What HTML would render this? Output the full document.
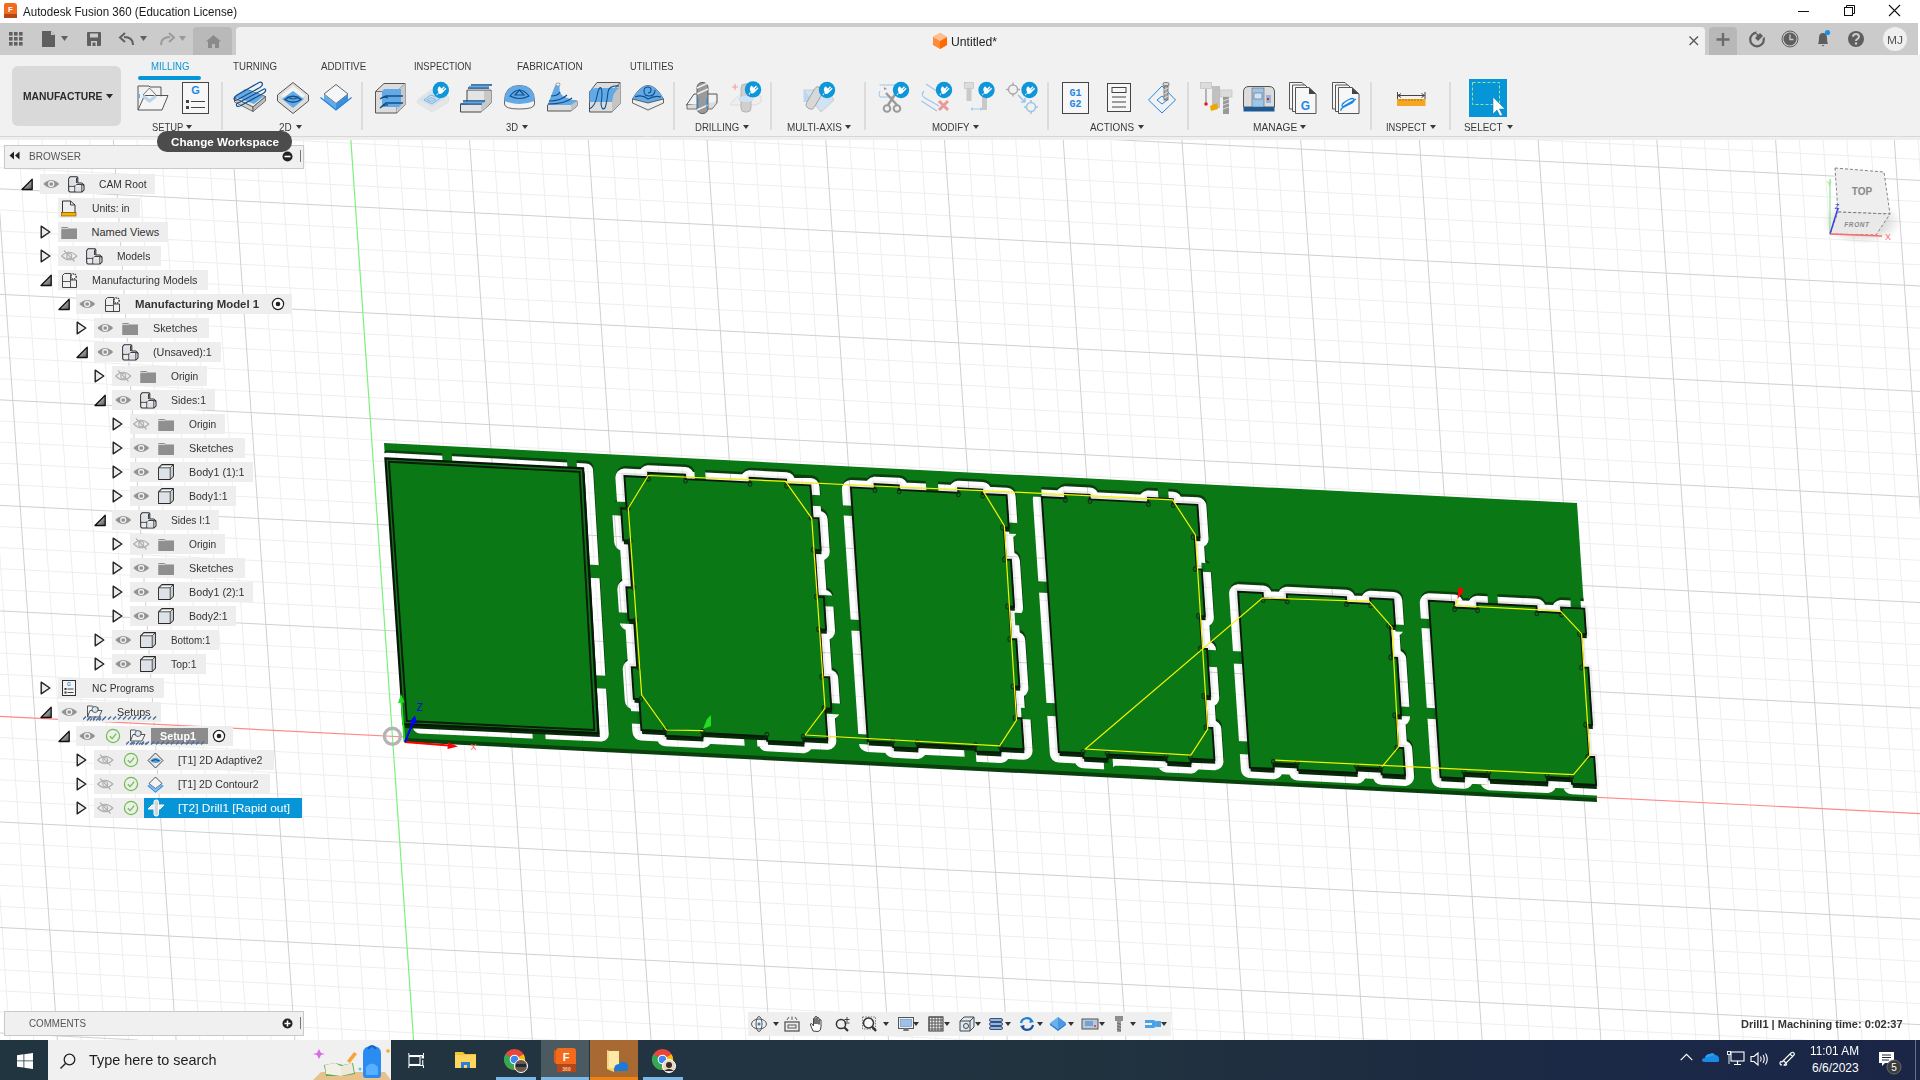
<!DOCTYPE html>
<html><head><meta charset="utf-8"><title>Fusion 360</title>
<style>
html,body{margin:0;padding:0;width:1920px;height:1080px;overflow:hidden;background:#fff;font-family:"Liberation Sans", sans-serif}
.t{position:absolute;white-space:pre;transform-origin:0 0}
svg{display:block}
</style></head><body>
<div style="position:absolute;left:0px;top:0px;width:1920px;height:23px;background:#ffffff"></div>
<svg style="position:absolute;left:3px;top:3px;overflow:visible;" width="16" height="16" viewBox="0 0 16 16"><path d="M1 2 Q1 0 3 0 L11 0 Q14 0 14 3 L14 14 L3 15 Q1 15 1 13Z" fill="#f26b1d"/><rect x="1" y="11" width="13" height="4" fill="#b4461a"/><text x="7.5" y="9" font-size="8" font-weight="700" fill="#fff" text-anchor="middle" font-family="Liberation Sans">F</text></svg>
<svg style="position:absolute;left:1797px;top:5px;overflow:visible;" width="14" height="14" viewBox="0 0 14 14"><line x1="1" y1="6.5" x2="12" y2="6.5" stroke="#111" stroke-width="1"/></svg>
<svg style="position:absolute;left:1843px;top:4px;overflow:visible;" width="14" height="14" viewBox="0 0 14 14"><rect x="1.5" y="3.5" width="8" height="8" fill="none" stroke="#111"/><path d="M3.5 3.5V1.5H11.5V9.5H9.5" fill="none" stroke="#111"/></svg>
<svg style="position:absolute;left:1888px;top:4px;overflow:visible;" width="14" height="14" viewBox="0 0 14 14"><path d="M1 1L12 12M12 1L1 12" stroke="#111" stroke-width="1.1"/></svg>
<div style="position:absolute;left:0px;top:23px;width:1918px;height:32px;background:#cbcbcb"></div>
<div style="position:absolute;left:1918px;top:23px;width:2px;height:32px;background:#ffffff"></div>
<div style="position:absolute;left:193px;top:27px;width:39px;height:28px;background:#b9b9b9;border-radius:4px 4px 0 0"></div>
<div style="position:absolute;left:236px;top:27px;width:1469px;height:28px;background:#f1f1f1;border-radius:4px 4px 0 0"></div>
<div style="position:absolute;left:1709px;top:27px;width:28px;height:28px;background:#b8b8b8;border-radius:4px 4px 0 0"></div>
<div style="position:absolute;left:0px;top:55px;width:1920px;height:82px;background:#f1f1f1"></div>
<div style="position:absolute;left:0px;top:136px;width:1920px;height:1px;background:#d6d6d6"></div>
<svg style="position:absolute;left:0px;top:0px;overflow:visible;" width="30" height="50" viewBox="0 0 30 50"><rect x="9" y="32" width="3.6" height="3.6" fill="#616161"/><rect x="9" y="37" width="3.6" height="3.6" fill="#616161"/><rect x="9" y="42" width="3.6" height="3.6" fill="#616161"/><rect x="14" y="32" width="3.6" height="3.6" fill="#616161"/><rect x="14" y="37" width="3.6" height="3.6" fill="#616161"/><rect x="14" y="42" width="3.6" height="3.6" fill="#616161"/><rect x="19" y="32" width="3.6" height="3.6" fill="#616161"/><rect x="19" y="37" width="3.6" height="3.6" fill="#616161"/><rect x="19" y="42" width="3.6" height="3.6" fill="#616161"/></svg>
<svg style="position:absolute;left:42px;top:31px;overflow:visible;" width="14" height="17" viewBox="0 0 14 17"><path d="M0 0H9L13 4V16H0Z" fill="#5f5f5f"/><path d="M9 0V4H13" fill="#cbcbcb"/></svg>
<svg style="position:absolute;left:61px;top:36px;overflow:visible;" width="8" height="6" viewBox="0 0 8 6"><path d="M0 0H7L3.5 5Z" fill="#5f5f5f"/></svg>
<svg style="position:absolute;left:87px;top:32px;overflow:visible;" width="14" height="14" viewBox="0 0 14 14"><path d="M0 1Q0 0 1 0H13Q14 0 14 1V13Q14 14 13 14H1Q0 14 0 13Z" fill="#5f5f5f"/><rect x="3" y="1.5" width="8" height="4" fill="#cbcbcb"/><rect x="4" y="9" width="6" height="5" fill="#cbcbcb"/><rect x="5.5" y="10.5" width="3" height="3.5" fill="#5f5f5f"/></svg>
<svg style="position:absolute;left:120px;top:33px;overflow:visible;" width="14" height="13" viewBox="0 0 14 13"><path d="M13 12 Q13 4 4 4" fill="none" stroke="#5f5f5f" stroke-width="2"/><path d="M5 0L0 4.5L5 9" fill="none" stroke="#5f5f5f" stroke-width="2"/></svg>
<svg style="position:absolute;left:140px;top:36px;overflow:visible;" width="8" height="6" viewBox="0 0 8 6"><path d="M0 0H7L3.5 5Z" fill="#5f5f5f"/></svg>
<svg style="position:absolute;left:160px;top:33px;overflow:visible;" width="14" height="13" viewBox="0 0 14 13"><path d="M1 12 Q1 4 10 4" fill="none" stroke="#9a9a9a" stroke-width="2"/><path d="M9 0L14 4.5L9 9" fill="none" stroke="#9a9a9a" stroke-width="2"/></svg>
<svg style="position:absolute;left:179px;top:36px;overflow:visible;" width="8" height="6" viewBox="0 0 8 6"><path d="M0 0H7L3.5 5Z" fill="#9a9a9a"/></svg>
<svg style="position:absolute;left:206px;top:35px;overflow:visible;" width="15" height="13" viewBox="0 0 15 13"><path d="M7.5 0L15 6.5H13V13H9V9H6V13H2V6.5H0Z" fill="#8a8a8a"/></svg>
<svg style="position:absolute;left:932px;top:33px;overflow:visible;" width="16" height="17" viewBox="0 0 16 17"><path d="M8 0L15 4V12L8 16L1 12V4Z" fill="#ff8c3a"/><path d="M8 8L15 4V12L8 16Z" fill="#ff6a00"/><path d="M1 4L8 0L15 4L8 8Z" fill="#ffc08f"/></svg>
<svg style="position:absolute;left:1689px;top:36px;overflow:visible;" width="10" height="10" viewBox="0 0 10 10"><path d="M0.5 0.5L9 9M9 0.5L0.5 9" stroke="#555" stroke-width="1.3"/></svg>
<svg style="position:absolute;left:1716px;top:33px;overflow:visible;" width="14" height="14" viewBox="0 0 14 14"><path d="M7 0V13M0.5 6.5H13.5" stroke="#6c6c6c" stroke-width="2.4"/></svg>
<svg style="position:absolute;left:1748px;top:30px;overflow:visible;" width="18" height="18" viewBox="0 0 18 18"><circle cx="9" cy="9.5" r="6.8" fill="none" stroke="#5e5e5e" stroke-width="2.2"/><path d="M8 5L12 1.5L15 4.5L11.5 8.5Z" fill="#5e5e5e"/><rect x="9" y="0" width="9" height="6" fill="#cbcbcb" transform="rotate(45 13 3)"/><path d="M7 8L12 3L15 6L10 11Z" fill="#5e5e5e"/></svg>
<svg style="position:absolute;left:1781px;top:30px;overflow:visible;" width="18" height="18" viewBox="0 0 18 18"><circle cx="9" cy="9" r="8" fill="none" stroke="#5e5e5e" stroke-width="1"/><circle cx="9" cy="9" r="6.5" fill="#5e5e5e"/><path d="M9 4.5V9.5H12.5" fill="none" stroke="#cbcbcb" stroke-width="1.3"/></svg>
<svg style="position:absolute;left:1815px;top:30px;overflow:visible;" width="18" height="18" viewBox="0 0 18 18"><path d="M3 14Q4 12 4 8Q4 3 8 3Q12 3 12 8Q12 12 13 14Z" fill="#5e5e5e"/><path d="M6.5 15H9.5L8 16.5Z" fill="#5e5e5e"/><circle cx="12.5" cy="2.5" r="2.6" fill="#1592e6"/></svg>
<svg style="position:absolute;left:1847px;top:30px;overflow:visible;" width="18" height="18" viewBox="0 0 18 18"><circle cx="9" cy="9" r="8" fill="#5e5e5e"/><path d="M6 6.8Q6 4 9 4Q12 4 12 6.6Q12 8.2 10 9.3Q9 9.9 9 11" fill="none" stroke="#cbcbcb" stroke-width="2"/><circle cx="9" cy="13.5" r="1.2" fill="#cbcbcb"/></svg>
<div style="position:absolute;left:1883px;top:27px;width:24px;height:24px;background:#efefef;border-radius:50%"></div>
<div style="position:absolute;left:12px;top:66px;width:109px;height:60px;background:#d9d9d9;border-radius:6px"></div>
<svg style="position:absolute;left:106px;top:94px;overflow:visible;" width="8" height="6" viewBox="0 0 8 6"><path d="M0 0H7L3.5 4.5Z" fill="#2b2b2b"/></svg>
<div style="position:absolute;left:138px;top:76px;width:63px;height:3.5px;background:#0696d7;border-radius:2px"></div>
<div style="position:absolute;left:221px;top:82px;width:2px;height:48px;background:#dcdcdc"></div>
<div style="position:absolute;left:361px;top:82px;width:2px;height:48px;background:#dcdcdc"></div>
<div style="position:absolute;left:673px;top:82px;width:2px;height:48px;background:#dcdcdc"></div>
<div style="position:absolute;left:770px;top:82px;width:2px;height:48px;background:#dcdcdc"></div>
<div style="position:absolute;left:864px;top:82px;width:2px;height:48px;background:#dcdcdc"></div>
<div style="position:absolute;left:1047px;top:82px;width:2px;height:48px;background:#dcdcdc"></div>
<div style="position:absolute;left:1187px;top:82px;width:2px;height:48px;background:#dcdcdc"></div>
<div style="position:absolute;left:1370px;top:82px;width:2px;height:48px;background:#dcdcdc"></div>
<div style="position:absolute;left:1449px;top:82px;width:2px;height:48px;background:#dcdcdc"></div>
<svg style="position:absolute;left:186px;top:124.5px;overflow:visible;" width="7" height="5" viewBox="0 0 7 5"><path d="M0 0H6L3 4Z" fill="#3a3a3a"/></svg>
<svg style="position:absolute;left:296px;top:124.5px;overflow:visible;" width="7" height="5" viewBox="0 0 7 5"><path d="M0 0H6L3 4Z" fill="#3a3a3a"/></svg>
<svg style="position:absolute;left:522px;top:124.5px;overflow:visible;" width="7" height="5" viewBox="0 0 7 5"><path d="M0 0H6L3 4Z" fill="#3a3a3a"/></svg>
<svg style="position:absolute;left:743px;top:124.5px;overflow:visible;" width="7" height="5" viewBox="0 0 7 5"><path d="M0 0H6L3 4Z" fill="#3a3a3a"/></svg>
<svg style="position:absolute;left:845px;top:124.5px;overflow:visible;" width="7" height="5" viewBox="0 0 7 5"><path d="M0 0H6L3 4Z" fill="#3a3a3a"/></svg>
<svg style="position:absolute;left:973px;top:124.5px;overflow:visible;" width="7" height="5" viewBox="0 0 7 5"><path d="M0 0H6L3 4Z" fill="#3a3a3a"/></svg>
<svg style="position:absolute;left:1138px;top:124.5px;overflow:visible;" width="7" height="5" viewBox="0 0 7 5"><path d="M0 0H6L3 4Z" fill="#3a3a3a"/></svg>
<svg style="position:absolute;left:1300px;top:124.5px;overflow:visible;" width="7" height="5" viewBox="0 0 7 5"><path d="M0 0H6L3 4Z" fill="#3a3a3a"/></svg>
<svg style="position:absolute;left:1430px;top:124.5px;overflow:visible;" width="7" height="5" viewBox="0 0 7 5"><path d="M0 0H6L3 4Z" fill="#3a3a3a"/></svg>
<svg style="position:absolute;left:1507px;top:124.5px;overflow:visible;" width="7" height="5" viewBox="0 0 7 5"><path d="M0 0H6L3 4Z" fill="#3a3a3a"/></svg>
<svg style="position:absolute;left:0;top:0" width="1920" height="140"><g transform="translate(137,85)"><path d="M1 25V1H12L13 2H24V12" fill="none" stroke="#555" stroke-width="1"/><path d="M6 10L12.5 3L19 10L12.5 15Z" fill="#f4f4f4" stroke="#666" stroke-width="0.9"/><path d="M1 25L7.5 10.5H31L25 25Z" fill="#f6f6f6" fill-opacity="0.7" stroke="#555" stroke-width="1"/><path d="M6 11L12.5 16L19 11" fill="none" stroke="#b8d4ec" stroke-width="3"/><rect x="1" y="9" width="2" height="4" fill="#6aaee8"/></g><g transform="translate(182,82)"><rect x="0.5" y="0.5" width="26" height="31" fill="#f7f7f7" stroke="#444" stroke-width="1"/><text x="13.5" y="12" font-size="11" font-weight="700" fill="#1e88e5" text-anchor="middle" font-family="Liberation Sans">G</text><rect x="4" y="18" width="3" height="3" fill="#444"/><rect x="4" y="24" width="3" height="3" fill="#444"/><path d="M9 19.5H23M9 25.5H23" stroke="#444" stroke-width="1"/></g><g transform="translate(234,82)"><path d="M0.5 16L13 7.5L31.5 14.5L19 25Z" fill="#e8e8e8" stroke="#555" stroke-width="1"/><path d="M0.5 16V20L19 29.5V25Z" fill="#d2d2d2" stroke="#555" stroke-width="0.8"/><path d="M19 25V29.5L31.5 19V14.5Z" fill="#bcbcbc" stroke="#555" stroke-width="0.8"/><path d="M1 15L11 7L30 14L20 22Z" fill="#63a9e6"/><path d="M3 13L25 0.5Q28 -0.5 28.5 2Q28.5 4 26 5.5L3 18Q0 19 0 16.5Q0.5 14.5 3 13ZM6 20L30 7Q32 6.5 31.5 9Q31 10.5 29 11.5L6 24Q2 25.5 2.5 22Q3 21 6 20Z" fill="none" stroke="#0f4f8a" stroke-width="1.2"/></g><g transform="translate(277,82)"><path d="M16 0.5L31.5 13V19L16 31.5L0.5 19V13Z" fill="#dedede" stroke="#555" stroke-width="1"/><path d="M16 4L28 13.5L16 23L4 13.5Z" fill="#f4f4f4"/><path d="M16 9L27 17L16 26L5 17Z" fill="#63a9e6"/><path d="M8 17.5Q16 11 24 17.5Q16 23 8 17.5Z" fill="none" stroke="#0f4f8a" stroke-width="1.3"/><path d="M10 15Q16 19 22 15" fill="none" stroke="#0f4f8a" stroke-width="1"/></g><g transform="translate(320,84)"><path d="M16 0.5L28 10L16 19.5L4 10Z" fill="#f6f6f6" stroke="#555" stroke-width="0.9"/><path d="M4 10L16 19.5V26L4 16.5Z" fill="#63a9e6"/><path d="M16 19.5L28 10V16.5L16 26Z" fill="#3d8fd8"/><path d="M0.5 13.5L16 26L31.5 13.5" fill="none" stroke="#1e88e5" stroke-width="1.3"/></g><g transform="translate(375,83)"><path d="M0.5 8.5L9 0.5H30V22L22 30H0.5Z" fill="#dcdcdc" stroke="#555" stroke-width="1"/><path d="M22 8.5V30M0.5 8.5H22L30 0.5" fill="none" stroke="#555" stroke-width="0.8"/><path d="M22 8.5L30 0.5V22L22 30Z" fill="#c8c8c8"/><path d="M7 8.5L9 6H26V22L24 24H7Z" fill="#63a9e6"/><path d="M6 15L11 13H28M6 24L11 20H28M5 16Q9 13 13 15M5 25Q9 21 13 22" fill="none" stroke="#0f4f8a" stroke-width="1.3"/></g><g transform="translate(417,82)"><path d="M0.5 18L14 8L31.5 15V20L15 30L0.5 21Z" fill="#e6e6e6" stroke="#ddd" stroke-width="0.8"/><path d="M2 18L14 9.5L29 15.5L15 25Z" fill="#cfe3f5"/><path d="M7 18L14 13L23 16.5L15 22Z" fill="none" stroke="#7faad0" stroke-width="0.9"/><path d="M10 18L14 15.5L19 17.5L15 20Z" fill="#b8d6f0" stroke="#7faad0" stroke-width="0.7"/><g transform="translate(23.8,8)"><circle r="8.2" fill="#0d96d8"/><circle r="6.6" fill="none" stroke="#fff" stroke-width="0.8" opacity="0"/><path d="M-4.5 4.5L-2.2 2.2Q-4.5 -1 -1.5 -3.8L0.8 -1.6L3 -3.8L4 -2.8L1.8 -0.6L2.4 0L4.6 -2.2L5.6 -1.2L3.4 1L1.2 3.3Q-1.2 5 -2.9 3L-3.5 5.5Z" fill="#fff"/></g></g><g transform="translate(460,84)"><path d="M7 6H31V19L21 28H0.5V20H7Z" fill="#e4e4e4" stroke="#444" stroke-width="1"/><path d="M24 7H31V19L21 28V21L24 18Z" fill="#c8c8c8"/><path d="M7 5H31M0.5 20H24" stroke="#d8d8d8" stroke-width="1"/><path d="M11 1H32M8 4H29M3 17H25M0.5 20H22" stroke="#0f4f8a" stroke-width="1.6"/><path d="M9 2.5H29M3 18.5H24" stroke="#63a9e6" stroke-width="1.6"/></g><g transform="translate(504,85)"><path d="M0.5 16Q0.5 0.5 15.5 0.5Q30.5 0.5 30.5 16V19Q30.5 24 15.5 24Q0.5 24 0.5 19Z" fill="#f4f4f4" stroke="#555" stroke-width="0.9"/><path d="M0.5 16Q0.5 0.5 15.5 0.5Q30.5 0.5 30.5 16Q15.5 22 0.5 16Z" fill="#63a9e6"/><path d="M6 11Q15.5 -1 25 11Q15.5 16 6 11Z" fill="none" stroke="#0f4f8a" stroke-width="1.2"/><path d="M11 10L15.5 5L20 10Z" fill="none" stroke="#0f4f8a" stroke-width="1.2"/></g><g transform="translate(547,82)"><path d="M0.5 23L6 19H30V24L24 29H0.5Z" fill="#dedede" stroke="#555" stroke-width="1"/><path d="M24 23V29L30 24V19Z" fill="#c4c4c4"/><path d="M0.5 23L6 9Q8 3 10 1H13Q11 10 16 14Q24 18 30 19L24 23Z" fill="#63a9e6"/><rect x="9" y="1" width="4" height="3" rx="1.5" fill="#f4f4f4" stroke="#777" stroke-width="0.6"/><path d="M4 14Q11 14 13 10M2 19Q14 19 20 13M1 22Q18 22 25 16" fill="none" stroke="#0f4f8a" stroke-width="1.1"/></g><g transform="translate(589,82)"><path d="M0.5 30V10L8 0.5H31V22L23 30Z" fill="#dcdcdc" stroke="#555" stroke-width="1"/><path d="M23 10V30L31 22V0.5Z" fill="#c4c4c4"/><path d="M0.5 10H23L31 0.5" fill="none" stroke="#555" stroke-width="0.8"/><path d="M0.5 18V10Q2 6 8 6H30Q24 10 23 20H0.5Z" fill="#63a9e6"/><path d="M0 27Q6 25 8 14Q10 4 12 6Q14 10 12 22Q13 29 16 26Q18 20 19 10Q20 3 30 4" fill="none" stroke="#0f4f8a" stroke-width="1.1"/></g><g transform="translate(632,85)"><path d="M0.5 14Q8 0.5 16 0.5Q24 0.5 31.5 14V18L16 25L0.5 18Z" fill="#eeeeee" stroke="#555" stroke-width="0.9"/><path d="M0.5 14Q8 0.5 16 0.5Q24 0.5 31.5 14L16 18Z" fill="#63a9e6"/><path d="M0.5 14L16 18L31.5 14" fill="none" stroke="#444" stroke-width="0.8"/><path d="M16 8Q19 8 19 5Q19 2 16 2Q12 2 12 6Q12 11 17 11Q23 11 23 5M3 12Q10 9 16 14Q23 10 29 12" fill="none" stroke="#0f4f8a" stroke-width="1.1"/></g><g transform="translate(686,82)"><path d="M0.5 23L8 12H31V20L26 23Z" fill="#f2f2f2" stroke="#555" stroke-width="1"/><path d="M0.5 23H26L31 20" fill="none" stroke="#555"/><path d="M1 23V27H26L31 21V20" fill="#dcdcdc" stroke="#555" stroke-width="0.8"/><rect x="11" y="0.5" width="11" height="31" rx="5" fill="#9a9a9a" stroke="#555" stroke-width="0.9"/><path d="M11 6L22 1M11 12L22 7M11 28L22 23" stroke="#eee" stroke-width="1.4"/><path d="M12 16V26M21 16V26" stroke="#1e88e5" stroke-width="1"/></g><g transform="translate(730,82)"><path d="M0.5 22L8 14H31V20L26 23H0.5Z" fill="#eeeeee" stroke="#ddd"/><rect x="11" y="2" width="10" height="28" rx="4" fill="#cfcfcf" stroke="#aaa" stroke-width="0.8"/><ellipse cx="16" cy="17" rx="8" ry="3" fill="#cfe3f5"/><path d="M2 5H8M5 2V8" stroke="#f0a0a0" stroke-width="1.2"/><g transform="translate(23,7.4)"><circle r="8.2" fill="#0d96d8"/><circle r="6.6" fill="none" stroke="#fff" stroke-width="0.8" opacity="0"/><path d="M-4.5 4.5L-2.2 2.2Q-4.5 -1 -1.5 -3.8L0.8 -1.6L3 -3.8L4 -2.8L1.8 -0.6L2.4 0L4.6 -2.2L5.6 -1.2L3.4 1L1.2 3.3Q-1.2 5 -2.9 3L-3.5 5.5Z" fill="#fff"/></g></g><g transform="translate(803,82)"><path d="M0.5 8H25L31 18L18 30Z" fill="#cfe3f5" stroke="#ccc"/><path d="M0.5 8V20H10Z" fill="#b9d8f2"/><rect x="7" y="4" width="9" height="24" rx="4" fill="#d8d8d8" stroke="#9a9a9a" stroke-width="0.8" transform="rotate(30 11.5 16)"/><g transform="translate(24,8)"><circle r="8.2" fill="#0d96d8"/><circle r="6.6" fill="none" stroke="#fff" stroke-width="0.8" opacity="0"/><path d="M-4.5 4.5L-2.2 2.2Q-4.5 -1 -1.5 -3.8L0.8 -1.6L3 -3.8L4 -2.8L1.8 -0.6L2.4 0L4.6 -2.2L5.6 -1.2L3.4 1L1.2 3.3Q-1.2 5 -2.9 3L-3.5 5.5Z" fill="#fff"/></g></g><g transform="translate(879,82)"><path d="M0.5 3H17M1 9Q-1 13 1 15H15" fill="none" stroke="#9cc5ea" stroke-width="1"/><path d="M5 5L8 7L5 8Z" fill="#999"/><path d="M7 11L18 23M17 11L9 23" stroke="#9a9a9a" stroke-width="2.4"/><circle cx="8" cy="26.5" r="3.3" fill="none" stroke="#9a9a9a" stroke-width="2"/><circle cx="18" cy="26.5" r="3.3" fill="none" stroke="#9a9a9a" stroke-width="2"/><g transform="translate(22,8)"><circle r="8.2" fill="#0d96d8"/><circle r="6.6" fill="none" stroke="#fff" stroke-width="0.8" opacity="0"/><path d="M-4.5 4.5L-2.2 2.2Q-4.5 -1 -1.5 -3.8L0.8 -1.6L3 -3.8L4 -2.8L1.8 -0.6L2.4 0L4.6 -2.2L5.6 -1.2L3.4 1L1.2 3.3Q-1.2 5 -2.9 3L-3.5 5.5Z" fill="#fff"/></g></g><g transform="translate(921,82)"><path d="M5 2L20 12M0.5 19L16 29M3 9Q-1 13 4 16L18 24" fill="none" stroke="#9cc5ea" stroke-width="1.1"/><path d="M18 19L27 28M27 19L18 28" stroke="#e89a9a" stroke-width="3"/><g transform="translate(23,8)"><circle r="8.2" fill="#0d96d8"/><circle r="6.6" fill="none" stroke="#fff" stroke-width="0.8" opacity="0"/><path d="M-4.5 4.5L-2.2 2.2Q-4.5 -1 -1.5 -3.8L0.8 -1.6L3 -3.8L4 -2.8L1.8 -0.6L2.4 0L4.6 -2.2L5.6 -1.2L3.4 1L1.2 3.3Q-1.2 5 -2.9 3L-3.5 5.5Z" fill="#fff"/></g></g><g transform="translate(964,82)"><rect x="0.5" y="0.5" width="9" height="6" fill="#dcdcdc" stroke="#bbb" stroke-width="0.6"/><rect x="2.5" y="6" width="5" height="13" fill="#c9c9c9"/><rect x="18" y="13" width="5" height="15" fill="#c9c9c9"/><path d="M7 27H18M7 27L9 25.5M7 27L9 28.5M18 27L16 25.5M18 27L16 28.5" stroke="#9cc5ea" stroke-width="0.9"/><g transform="translate(22.5,8)"><circle r="8.2" fill="#0d96d8"/><circle r="6.6" fill="none" stroke="#fff" stroke-width="0.8" opacity="0"/><path d="M-4.5 4.5L-2.2 2.2Q-4.5 -1 -1.5 -3.8L0.8 -1.6L3 -3.8L4 -2.8L1.8 -0.6L2.4 0L4.6 -2.2L5.6 -1.2L3.4 1L1.2 3.3Q-1.2 5 -2.9 3L-3.5 5.5Z" fill="#fff"/></g></g><g transform="translate(1006,82)"><circle cx="7" cy="7.5" r="4.5" fill="none" stroke="#aaa" stroke-width="1.4"/><path d="M7 0.5V3M7 12V14.5M0 7.5H2.5M11.5 7.5H14" stroke="#aaa" stroke-width="1.4"/><circle cx="25" cy="25" r="4.5" fill="none" stroke="#9cc5ea" stroke-width="1.6"/><path d="M25 18V20.5M25 29.5V32M18 25H20.5M29.5 25H32" stroke="#9cc5ea" stroke-width="1.6"/><path d="M12 13L19 20M19 20L19 16M19 20L15 20" stroke="#9cc5ea" stroke-width="1.6"/><g transform="translate(23.5,8)"><circle r="8.2" fill="#0d96d8"/><circle r="6.6" fill="none" stroke="#fff" stroke-width="0.8" opacity="0"/><path d="M-4.5 4.5L-2.2 2.2Q-4.5 -1 -1.5 -3.8L0.8 -1.6L3 -3.8L4 -2.8L1.8 -0.6L2.4 0L4.6 -2.2L5.6 -1.2L3.4 1L1.2 3.3Q-1.2 5 -2.9 3L-3.5 5.5Z" fill="#fff"/></g></g><g transform="translate(1062,82)"><rect x="0.5" y="0.5" width="26" height="31" fill="#f7f7f7" stroke="#444" stroke-width="1"/><text x="13.5" y="14" font-size="10" font-weight="700" fill="#1e88e5" text-anchor="middle" font-family="Liberation Mono">G1</text><text x="13.5" y="25" font-size="10" font-weight="700" fill="#1e88e5" text-anchor="middle" font-family="Liberation Mono">G2</text></g><g transform="translate(1107,83)"><rect x="0.5" y="0.5" width="23" height="28" fill="#f7f7f7" stroke="#444" stroke-width="1"/><rect x="5" y="4.5" width="14" height="5" fill="none" stroke="#444" stroke-width="1"/><path d="M5 14H19M5 19H19M5 24H19" stroke="#444" stroke-width="1"/></g><g transform="translate(1148,82)"><path d="M14 4L27.5 18L14 31L0.5 18Z" fill="none" stroke="#1e88e5" stroke-width="1"/><path d="M14 14L19 18L14 22L9 18Z" fill="none" stroke="#1e88e5" stroke-width="1"/><rect x="15" y="0.5" width="6" height="3.5" rx="1.5" fill="#d8d8d8" stroke="#555" stroke-width="0.7"/><rect x="16" y="4" width="4" height="14" fill="#a8a8a8" stroke="#555" stroke-width="0.7"/><path d="M16 8L20 6M16 12L20 10M16 16L20 14" stroke="#eee" stroke-width="0.8"/></g><g transform="translate(1200,82)"><rect x="0.5" y="0.5" width="11" height="6" fill="#dcdcdc" stroke="#bbb" stroke-width="0.6"/><path d="M6 7V21" stroke="#777" stroke-width="1"/><circle cx="6" cy="22" r="1.8" fill="#e02020"/><rect x="12" y="4" width="8" height="22" fill="#c0c0c0"/><path d="M10 24L17 21L18 27L11 29Z" fill="#f0a500"/><rect x="20" y="8" width="12" height="7" fill="#dcdcdc" stroke="#bbb" stroke-width="0.6"/><rect x="23" y="15" width="6" height="17" fill="#9a9a9a"/><path d="M23 19L29 17M23 23L29 21M23 27L29 25" stroke="#ddd" stroke-width="0.9"/></g><g transform="translate(1243,86)"><path d="M0.5 21V6Q0.5 0.5 6 0.5H26Q31.5 0.5 31.5 6V21Z" fill="#dcdcdc" stroke="#444" stroke-width="0.9"/><rect x="9" y="2" width="12" height="19" fill="#9cc5ea" stroke="#666" stroke-width="0.6"/><rect x="11" y="7" width="8" height="6" fill="#cfe3f5" stroke="#666" stroke-width="0.6"/><rect x="23" y="9" width="5" height="8" fill="#8fb7e0"/><rect x="24" y="12" width="2" height="2" fill="#e02020"/><rect x="0.5" y="21" width="31" height="4.5" fill="#1d5a94"/></g><g transform="translate(1289,82)"><path d="M0.5 0.5H13L17 4.5V27H0.5Z" fill="#f7f7f7" stroke="#444" stroke-width="0.9"/><path d="M3.5 3H16L20 7V29.5H3.5Z" fill="#f7f7f7" stroke="#444" stroke-width="0.9"/><path d="M6.5 5.5H20L27 12V31.5H6.5Z" fill="#f7f7f7" stroke="#444" stroke-width="0.9"/><path d="M20 5.5L27 12H20Z" fill="#444"/><text x="16.5" y="28" font-size="12" font-weight="700" fill="#1e88e5" text-anchor="middle" font-family="Liberation Sans">G</text></g><g transform="translate(1332,82)"><path d="M0.5 0.5H13L17 4.5V27H0.5Z" fill="#f7f7f7" stroke="#444" stroke-width="0.9"/><path d="M3.5 3H16L20 7V29.5H3.5Z" fill="#f7f7f7" stroke="#444" stroke-width="0.9"/><path d="M6.5 5.5H20L27 12V31.5H6.5Z" fill="#f7f7f7" stroke="#444" stroke-width="0.9"/><path d="M20 5.5L27 12H20Z" fill="#444"/><path d="M24 17L12 24Q9 25.5 10.5 22Q12 20 17 17.5Q21 15.5 22 17.5Q23 19.5 17 22.5L12 25Q8 27 9 29" fill="none" stroke="#1e88e5" stroke-width="1.3"/></g><g transform="translate(1397,90)"><path d="M0.5 2V9M28 2V9M1 5.5H27.5" stroke="#444" stroke-width="1"/><path d="M1 5.5L4 3.5M1 5.5L4 7.5M27.5 5.5L24.5 3.5M27.5 5.5L24.5 7.5" stroke="#444" stroke-width="1"/><rect x="0" y="9" width="28.5" height="7" fill="#f5a623"/><path d="M3 9V11M6 9V11M9 9V11M12 9V11M15 9V11M18 9V11M21 9V11M24 9V11" stroke="#8a5a00" stroke-width="0.7"/></g><g transform="translate(1469,79)"><rect x="0" y="0" width="38" height="38" fill="#0696d7"/><rect x="3.5" y="3.5" width="27" height="22" fill="none" stroke="#9fe0a0" stroke-width="1" stroke-dasharray="3 2"/><path d="M24 18V35L28 31L31 37L33.5 36L30.5 30H36Z" fill="#fff" stroke="#0d6fa8" stroke-width="0.5"/></g></svg>
<div style="position:absolute;left:0px;top:137px;width:1920px;height:903px;background:#ffffff"></div>
<svg style="position:absolute;left:0;top:0" width="1920" height="1080"><line x1="9.88" y1="1040.00" x2="-5.00" y2="826.43" stroke="#eeeeee"/><line x1="33.63" y1="1040.00" x2="-5.00" y2="485.69" stroke="#eeeeee"/><line x1="81.12" y1="1040.00" x2="18.19" y2="137.00" stroke="#eeeeee"/><line x1="104.87" y1="1040.00" x2="41.94" y2="137.00" stroke="#eeeeee"/><line x1="128.61" y1="1040.00" x2="65.68" y2="137.00" stroke="#eeeeee"/><line x1="152.36" y1="1040.00" x2="89.43" y2="137.00" stroke="#eeeeee"/><line x1="199.85" y1="1040.00" x2="136.92" y2="137.00" stroke="#eeeeee"/><line x1="223.60" y1="1040.00" x2="160.67" y2="137.00" stroke="#eeeeee"/><line x1="247.34" y1="1040.00" x2="184.41" y2="137.00" stroke="#eeeeee"/><line x1="271.09" y1="1040.00" x2="208.16" y2="137.00" stroke="#eeeeee"/><line x1="318.58" y1="1040.00" x2="255.65" y2="137.00" stroke="#eeeeee"/><line x1="342.33" y1="1040.00" x2="279.40" y2="137.00" stroke="#eeeeee"/><line x1="366.07" y1="1040.00" x2="303.14" y2="137.00" stroke="#eeeeee"/><line x1="389.82" y1="1040.00" x2="326.89" y2="137.00" stroke="#eeeeee"/><line x1="437.31" y1="1040.00" x2="374.38" y2="137.00" stroke="#eeeeee"/><line x1="461.06" y1="1040.00" x2="398.13" y2="137.00" stroke="#eeeeee"/><line x1="484.80" y1="1040.00" x2="421.87" y2="137.00" stroke="#eeeeee"/><line x1="508.55" y1="1040.00" x2="445.62" y2="137.00" stroke="#eeeeee"/><line x1="556.04" y1="1040.00" x2="493.11" y2="137.00" stroke="#eeeeee"/><line x1="579.79" y1="1040.00" x2="516.86" y2="137.00" stroke="#eeeeee"/><line x1="603.53" y1="1040.00" x2="540.60" y2="137.00" stroke="#eeeeee"/><line x1="627.28" y1="1040.00" x2="564.35" y2="137.00" stroke="#eeeeee"/><line x1="674.77" y1="1040.00" x2="611.84" y2="137.00" stroke="#eeeeee"/><line x1="698.52" y1="1040.00" x2="635.59" y2="137.00" stroke="#eeeeee"/><line x1="722.26" y1="1040.00" x2="659.33" y2="137.00" stroke="#eeeeee"/><line x1="746.01" y1="1040.00" x2="683.08" y2="137.00" stroke="#eeeeee"/><line x1="793.50" y1="1040.00" x2="730.57" y2="137.00" stroke="#eeeeee"/><line x1="817.25" y1="1040.00" x2="754.32" y2="137.00" stroke="#eeeeee"/><line x1="840.99" y1="1040.00" x2="778.06" y2="137.00" stroke="#eeeeee"/><line x1="864.74" y1="1040.00" x2="801.81" y2="137.00" stroke="#eeeeee"/><line x1="912.23" y1="1040.00" x2="849.30" y2="137.00" stroke="#eeeeee"/><line x1="935.98" y1="1040.00" x2="873.05" y2="137.00" stroke="#eeeeee"/><line x1="959.72" y1="1040.00" x2="896.79" y2="137.00" stroke="#eeeeee"/><line x1="983.47" y1="1040.00" x2="920.54" y2="137.00" stroke="#eeeeee"/><line x1="1030.96" y1="1040.00" x2="968.03" y2="137.00" stroke="#eeeeee"/><line x1="1054.71" y1="1040.00" x2="991.78" y2="137.00" stroke="#eeeeee"/><line x1="1078.45" y1="1040.00" x2="1015.52" y2="137.00" stroke="#eeeeee"/><line x1="1102.20" y1="1040.00" x2="1039.27" y2="137.00" stroke="#eeeeee"/><line x1="1149.69" y1="1040.00" x2="1086.76" y2="137.00" stroke="#eeeeee"/><line x1="1173.43" y1="1040.00" x2="1110.51" y2="137.00" stroke="#eeeeee"/><line x1="1197.18" y1="1040.00" x2="1134.25" y2="137.00" stroke="#eeeeee"/><line x1="1220.93" y1="1040.00" x2="1158.00" y2="137.00" stroke="#eeeeee"/><line x1="1268.42" y1="1040.00" x2="1205.49" y2="137.00" stroke="#eeeeee"/><line x1="1292.16" y1="1040.00" x2="1229.24" y2="137.00" stroke="#eeeeee"/><line x1="1315.91" y1="1040.00" x2="1252.98" y2="137.00" stroke="#eeeeee"/><line x1="1339.66" y1="1040.00" x2="1276.73" y2="137.00" stroke="#eeeeee"/><line x1="1387.15" y1="1040.00" x2="1324.22" y2="137.00" stroke="#eeeeee"/><line x1="1410.89" y1="1040.00" x2="1347.97" y2="137.00" stroke="#eeeeee"/><line x1="1434.64" y1="1040.00" x2="1371.71" y2="137.00" stroke="#eeeeee"/><line x1="1458.39" y1="1040.00" x2="1395.46" y2="137.00" stroke="#eeeeee"/><line x1="1505.88" y1="1040.00" x2="1442.95" y2="137.00" stroke="#eeeeee"/><line x1="1529.62" y1="1040.00" x2="1466.70" y2="137.00" stroke="#eeeeee"/><line x1="1553.37" y1="1040.00" x2="1490.44" y2="137.00" stroke="#eeeeee"/><line x1="1577.12" y1="1040.00" x2="1514.19" y2="137.00" stroke="#eeeeee"/><line x1="1624.61" y1="1040.00" x2="1561.68" y2="137.00" stroke="#eeeeee"/><line x1="1648.35" y1="1040.00" x2="1585.43" y2="137.00" stroke="#eeeeee"/><line x1="1672.10" y1="1040.00" x2="1609.17" y2="137.00" stroke="#eeeeee"/><line x1="1695.85" y1="1040.00" x2="1632.92" y2="137.00" stroke="#eeeeee"/><line x1="1743.34" y1="1040.00" x2="1680.41" y2="137.00" stroke="#eeeeee"/><line x1="1767.08" y1="1040.00" x2="1704.16" y2="137.00" stroke="#eeeeee"/><line x1="1790.83" y1="1040.00" x2="1727.90" y2="137.00" stroke="#eeeeee"/><line x1="1814.58" y1="1040.00" x2="1751.65" y2="137.00" stroke="#eeeeee"/><line x1="1862.07" y1="1040.00" x2="1799.14" y2="137.00" stroke="#eeeeee"/><line x1="1885.81" y1="1040.00" x2="1822.89" y2="137.00" stroke="#eeeeee"/><line x1="1909.56" y1="1040.00" x2="1846.63" y2="137.00" stroke="#eeeeee"/><line x1="1925.00" y1="920.82" x2="1870.38" y2="137.00" stroke="#eeeeee"/><line x1="1925.00" y1="239.33" x2="1917.87" y2="137.00" stroke="#eeeeee"/><line x1="-5.00" y1="1011.66" x2="554.94" y2="1040.00" stroke="#eeeeee"/><line x1="-5.00" y1="990.56" x2="971.97" y2="1040.00" stroke="#eeeeee"/><line x1="-5.00" y1="969.45" x2="1389.00" y2="1040.00" stroke="#eeeeee"/><line x1="-5.00" y1="948.35" x2="1806.03" y2="1040.00" stroke="#eeeeee"/><line x1="-5.00" y1="906.14" x2="1925.00" y2="1003.81" stroke="#eeeeee"/><line x1="-5.00" y1="885.03" x2="1925.00" y2="982.70" stroke="#eeeeee"/><line x1="-5.00" y1="863.93" x2="1925.00" y2="961.60" stroke="#eeeeee"/><line x1="-5.00" y1="842.82" x2="1925.00" y2="940.49" stroke="#eeeeee"/><line x1="-5.00" y1="800.61" x2="1925.00" y2="898.28" stroke="#eeeeee"/><line x1="-5.00" y1="779.50" x2="1925.00" y2="877.18" stroke="#eeeeee"/><line x1="-5.00" y1="758.40" x2="1925.00" y2="856.07" stroke="#eeeeee"/><line x1="-5.00" y1="737.29" x2="1925.00" y2="834.97" stroke="#eeeeee"/><line x1="-5.00" y1="695.08" x2="1925.00" y2="792.76" stroke="#eeeeee"/><line x1="-5.00" y1="673.98" x2="1925.00" y2="771.65" stroke="#eeeeee"/><line x1="-5.00" y1="652.87" x2="1925.00" y2="750.55" stroke="#eeeeee"/><line x1="-5.00" y1="631.77" x2="1925.00" y2="729.44" stroke="#eeeeee"/><line x1="-5.00" y1="589.56" x2="1925.00" y2="687.23" stroke="#eeeeee"/><line x1="-5.00" y1="568.45" x2="1925.00" y2="666.13" stroke="#eeeeee"/><line x1="-5.00" y1="547.35" x2="1925.00" y2="645.02" stroke="#eeeeee"/><line x1="-5.00" y1="526.24" x2="1925.00" y2="623.91" stroke="#eeeeee"/><line x1="-5.00" y1="484.03" x2="1925.00" y2="581.70" stroke="#eeeeee"/><line x1="-5.00" y1="462.92" x2="1925.00" y2="560.60" stroke="#eeeeee"/><line x1="-5.00" y1="441.82" x2="1925.00" y2="539.49" stroke="#eeeeee"/><line x1="-5.00" y1="420.71" x2="1925.00" y2="518.39" stroke="#eeeeee"/><line x1="-5.00" y1="378.50" x2="1925.00" y2="476.18" stroke="#eeeeee"/><line x1="-5.00" y1="357.40" x2="1925.00" y2="455.07" stroke="#eeeeee"/><line x1="-5.00" y1="336.29" x2="1925.00" y2="433.97" stroke="#eeeeee"/><line x1="-5.00" y1="315.19" x2="1925.00" y2="412.86" stroke="#eeeeee"/><line x1="-5.00" y1="272.98" x2="1925.00" y2="370.65" stroke="#eeeeee"/><line x1="-5.00" y1="251.87" x2="1925.00" y2="349.55" stroke="#eeeeee"/><line x1="-5.00" y1="230.77" x2="1925.00" y2="328.44" stroke="#eeeeee"/><line x1="-5.00" y1="209.66" x2="1925.00" y2="307.34" stroke="#eeeeee"/><line x1="-5.00" y1="167.45" x2="1925.00" y2="265.12" stroke="#eeeeee"/><line x1="-5.00" y1="146.35" x2="1925.00" y2="244.02" stroke="#eeeeee"/><line x1="227.38" y1="137.00" x2="1925.00" y2="222.91" stroke="#eeeeee"/><line x1="644.41" y1="137.00" x2="1925.00" y2="201.81" stroke="#eeeeee"/><line x1="1478.47" y1="137.00" x2="1925.00" y2="159.60" stroke="#eeeeee"/><line x1="1895.50" y1="137.00" x2="1925.00" y2="138.49" stroke="#eeeeee"/><line x1="57.38" y1="1040.00" x2="-5.00" y2="144.94" stroke="#d0d0d0"/><line x1="176.10" y1="1040.00" x2="113.18" y2="137.00" stroke="#d0d0d0"/><line x1="294.83" y1="1040.00" x2="231.91" y2="137.00" stroke="#d0d0d0"/><line x1="532.29" y1="1040.00" x2="469.37" y2="137.00" stroke="#d0d0d0"/><line x1="651.02" y1="1040.00" x2="588.10" y2="137.00" stroke="#d0d0d0"/><line x1="769.75" y1="1040.00" x2="706.83" y2="137.00" stroke="#d0d0d0"/><line x1="888.48" y1="1040.00" x2="825.55" y2="137.00" stroke="#d0d0d0"/><line x1="1007.21" y1="1040.00" x2="944.28" y2="137.00" stroke="#d0d0d0"/><line x1="1125.94" y1="1040.00" x2="1063.01" y2="137.00" stroke="#d0d0d0"/><line x1="1244.67" y1="1040.00" x2="1181.74" y2="137.00" stroke="#d0d0d0"/><line x1="1363.40" y1="1040.00" x2="1300.47" y2="137.00" stroke="#d0d0d0"/><line x1="1482.13" y1="1040.00" x2="1419.20" y2="137.00" stroke="#d0d0d0"/><line x1="1600.86" y1="1040.00" x2="1537.93" y2="137.00" stroke="#d0d0d0"/><line x1="1719.59" y1="1040.00" x2="1656.66" y2="137.00" stroke="#d0d0d0"/><line x1="1838.32" y1="1040.00" x2="1775.39" y2="137.00" stroke="#d0d0d0"/><line x1="1925.00" y1="580.07" x2="1894.12" y2="137.00" stroke="#d0d0d0"/><line x1="-5.00" y1="1032.77" x2="137.91" y2="1040.00" stroke="#d0d0d0"/><line x1="-5.00" y1="927.24" x2="1925.00" y2="1024.92" stroke="#d0d0d0"/><line x1="-5.00" y1="821.71" x2="1925.00" y2="919.39" stroke="#d0d0d0"/><line x1="-5.00" y1="610.66" x2="1925.00" y2="708.34" stroke="#d0d0d0"/><line x1="-5.00" y1="505.14" x2="1925.00" y2="602.81" stroke="#d0d0d0"/><line x1="-5.00" y1="399.61" x2="1925.00" y2="497.28" stroke="#d0d0d0"/><line x1="-5.00" y1="294.08" x2="1925.00" y2="391.76" stroke="#d0d0d0"/><line x1="-5.00" y1="188.56" x2="1925.00" y2="286.23" stroke="#d0d0d0"/><line x1="1061.44" y1="137.00" x2="1925.00" y2="180.70" stroke="#d0d0d0"/><line x1="413.56" y1="1040.00" x2="350.64" y2="137.00" stroke="#7cf27c" stroke-width="1.2"/><line x1="-5.00" y1="716.19" x2="1925.00" y2="813.86" stroke="#ff8a8a" stroke-width="1.2"/></svg>
<div style='position:absolute;left:0;top:137px;width:1920px;height:3px;background:#efefef'></div>
<svg style="position:absolute;left:0;top:0" width="1920" height="1080"><defs><mask id="chm" maskUnits="userSpaceOnUse" x="0" y="0" width="1920" height="1080"><rect x="0" y="0" width="1920" height="1080" fill="#fff"/><g transform="translate(0,1.5)"><polygon points="624.40,476.02 648.40,477.23 648.10,472.73 685.10,474.59 685.40,479.09 749.90,482.33 749.60,477.83 786.10,479.67 786.40,484.17 810.40,485.38 812.58,517.88 818.58,518.18 820.72,550.18 814.72,549.88 817.86,596.88 823.86,597.18 826.04,629.68 820.04,629.38 823.22,676.88 829.22,677.18 831.32,708.68 825.32,708.38 827.40,739.38 803.40,738.17 803.70,742.67 767.20,740.83 766.90,736.33 702.40,733.09 702.70,737.59 665.70,735.73 665.40,731.23 641.40,730.02 639.32,699.02 633.82,698.75 631.72,667.25 637.22,667.52 634.04,620.02 628.54,619.75 626.36,587.25 631.86,587.52 628.72,540.52 623.22,540.25 621.08,508.25 626.58,508.52" fill="#000" stroke="#000" stroke-width="18" stroke-linejoin="round"/><polygon points="850.90,487.41 874.90,488.62 874.60,484.12 898.80,485.34 899.10,489.84 958.40,492.82 958.10,488.32 982.30,489.54 982.60,494.04 1006.60,495.25 1008.78,527.75 1003.78,527.49 1005.92,559.49 1010.92,559.75 1014.06,606.75 1009.06,606.49 1011.24,638.99 1016.24,639.25 1019.42,686.75 1014.42,686.49 1016.52,717.99 1021.52,718.25 1023.60,749.25 1000.30,748.07 1000.60,752.57 975.80,751.33 975.50,746.83 917.30,743.90 917.60,748.40 893.10,747.17 892.80,742.67 867.90,741.41" fill="#000" stroke="#000" stroke-width="18" stroke-linejoin="round"/><polygon points="1041.80,497.02 1065.30,498.20 1065.00,493.70 1089.60,494.94 1089.90,499.44 1148.30,502.37 1148.00,497.87 1172.80,499.12 1173.10,503.62 1197.40,504.84 1199.58,537.34 1194.58,537.09 1196.72,569.09 1201.72,569.34 1204.86,616.34 1199.86,616.09 1202.04,648.59 1207.04,648.84 1210.22,696.34 1205.22,696.09 1207.32,727.59 1212.32,727.84 1214.46,759.84 1190.36,758.63 1190.67,763.13 1166.57,761.92 1166.26,757.42 1107.26,754.45 1107.57,758.95 1083.47,757.74 1083.16,753.24 1058.86,752.02" fill="#000" stroke="#000" stroke-width="18" stroke-linejoin="round"/><polygon points="1238.10,591.70 1262.70,592.94 1263.07,598.44 1287.17,599.65 1286.80,594.15 1346.00,597.13 1346.37,602.63 1370.47,603.84 1370.10,598.34 1393.30,599.51 1395.06,625.91 1390.06,625.66 1392.20,657.56 1397.20,657.81 1401.06,715.51 1396.06,715.26 1398.23,747.76 1403.23,748.01 1405.07,775.41 1381.67,774.23 1381.30,768.73 1356.60,767.49 1356.97,772.99 1297.77,770.01 1297.40,764.51 1273.40,763.31 1273.77,768.81 1249.87,767.60" fill="#000" stroke="#000" stroke-width="18" stroke-linejoin="round"/><polygon points="1428.76,600.80 1454.16,602.07 1454.53,607.57 1477.53,608.73 1477.16,603.23 1536.46,606.21 1536.83,611.71 1561.43,612.95 1561.06,607.45 1584.26,608.62 1585.98,634.22 1580.98,633.97 1583.22,667.47 1588.22,667.72 1592.05,725.02 1587.05,724.77 1589.19,756.77 1594.19,757.02 1596.07,785.02 1571.97,783.81 1571.60,778.31 1547.10,777.07 1547.47,782.57 1489.27,779.65 1488.90,774.15 1463.80,772.88 1464.17,778.38 1440.57,777.20" fill="#000" stroke="#000" stroke-width="18" stroke-linejoin="round"/><polygon points="387.40,458.80 585.60,469.40 601.30,732.50 420.30,724.50" fill="#000" stroke="#000" stroke-width="15" stroke-linejoin="round"/></g></mask></defs>
<defs><clipPath id="bc"><polygon points="384.00,443.00 1577.00,503.01 1596.74,798.01 403.74,738.00"/></clipPath></defs>
<g mask="url(#chm)"><polygon points="403.40,733.00 1596.40,793.01 1597.00,802.01 404.00,742.00" fill="#0a3f0e"/>
<polygon points="384.00,443.00 1577.00,503.01 1596.74,798.01 403.74,738.00" fill="#0b7816"/><g clip-path="url(#bc)"><g transform="translate(0.6,-1.1)"><polygon points="624.40,476.02 648.40,477.23 648.10,472.73 685.10,474.59 685.40,479.09 749.90,482.33 749.60,477.83 786.10,479.67 786.40,484.17 810.40,485.38 812.58,517.88 818.58,518.18 820.72,550.18 814.72,549.88 817.86,596.88 823.86,597.18 826.04,629.68 820.04,629.38 823.22,676.88 829.22,677.18 831.32,708.68 825.32,708.38 827.40,739.38 803.40,738.17 803.70,742.67 767.20,740.83 766.90,736.33 702.40,733.09 702.70,737.59 665.70,735.73 665.40,731.23 641.40,730.02 639.32,699.02 633.82,698.75 631.72,667.25 637.22,667.52 634.04,620.02 628.54,619.75 626.36,587.25 631.86,587.52 628.72,540.52 623.22,540.25 621.08,508.25 626.58,508.52" fill="#0a3f0e" stroke="#0a3f0e" stroke-width="18" stroke-linejoin="round"/><polygon points="850.90,487.41 874.90,488.62 874.60,484.12 898.80,485.34 899.10,489.84 958.40,492.82 958.10,488.32 982.30,489.54 982.60,494.04 1006.60,495.25 1008.78,527.75 1003.78,527.49 1005.92,559.49 1010.92,559.75 1014.06,606.75 1009.06,606.49 1011.24,638.99 1016.24,639.25 1019.42,686.75 1014.42,686.49 1016.52,717.99 1021.52,718.25 1023.60,749.25 1000.30,748.07 1000.60,752.57 975.80,751.33 975.50,746.83 917.30,743.90 917.60,748.40 893.10,747.17 892.80,742.67 867.90,741.41" fill="#0a3f0e" stroke="#0a3f0e" stroke-width="18" stroke-linejoin="round"/><polygon points="1041.80,497.02 1065.30,498.20 1065.00,493.70 1089.60,494.94 1089.90,499.44 1148.30,502.37 1148.00,497.87 1172.80,499.12 1173.10,503.62 1197.40,504.84 1199.58,537.34 1194.58,537.09 1196.72,569.09 1201.72,569.34 1204.86,616.34 1199.86,616.09 1202.04,648.59 1207.04,648.84 1210.22,696.34 1205.22,696.09 1207.32,727.59 1212.32,727.84 1214.46,759.84 1190.36,758.63 1190.67,763.13 1166.57,761.92 1166.26,757.42 1107.26,754.45 1107.57,758.95 1083.47,757.74 1083.16,753.24 1058.86,752.02" fill="#0a3f0e" stroke="#0a3f0e" stroke-width="18" stroke-linejoin="round"/><polygon points="1238.10,591.70 1262.70,592.94 1263.07,598.44 1287.17,599.65 1286.80,594.15 1346.00,597.13 1346.37,602.63 1370.47,603.84 1370.10,598.34 1393.30,599.51 1395.06,625.91 1390.06,625.66 1392.20,657.56 1397.20,657.81 1401.06,715.51 1396.06,715.26 1398.23,747.76 1403.23,748.01 1405.07,775.41 1381.67,774.23 1381.30,768.73 1356.60,767.49 1356.97,772.99 1297.77,770.01 1297.40,764.51 1273.40,763.31 1273.77,768.81 1249.87,767.60" fill="#0a3f0e" stroke="#0a3f0e" stroke-width="18" stroke-linejoin="round"/><polygon points="1428.76,600.80 1454.16,602.07 1454.53,607.57 1477.53,608.73 1477.16,603.23 1536.46,606.21 1536.83,611.71 1561.43,612.95 1561.06,607.45 1584.26,608.62 1585.98,634.22 1580.98,633.97 1583.22,667.47 1588.22,667.72 1592.05,725.02 1587.05,724.77 1589.19,756.77 1594.19,757.02 1596.07,785.02 1571.97,783.81 1571.60,778.31 1547.10,777.07 1547.47,782.57 1489.27,779.65 1488.90,774.15 1463.80,772.88 1464.17,778.38 1440.57,777.20" fill="#0a3f0e" stroke="#0a3f0e" stroke-width="18" stroke-linejoin="round"/><polygon points="387.40,458.80 585.60,469.40 601.30,732.50 420.30,724.50" fill="#0a3f0e" stroke="#0a3f0e" stroke-width="15" stroke-linejoin="round"/></g></g></g>
<g clip-path="url(#bc)"><polygon points="441.73,447.90 451.43,448.39 452.37,462.39 442.67,461.90" fill="#0b7816"/><polygon points="566.53,454.17 576.13,454.66 577.07,468.66 567.47,468.17" fill="#0b7816"/><polygon points="587.47,564.56 605.47,565.46 606.35,578.56 588.35,577.66" fill="#0b7816"/><polygon points="594.87,675.16 612.87,676.06 613.74,689.06 595.74,688.16" fill="#0b7816"/><polygon points="531.93,726.51 544.83,727.16 545.83,742.16 532.93,741.51" fill="#0b7816"/><polygon points="609.15,501.27 626.15,502.12 627.07,515.92 610.07,515.07" fill="#0b7816"/><polygon points="616.57,612.17 633.57,613.02 634.32,624.22 617.32,623.37" fill="#0b7816"/><polygon points="623.16,710.67 640.16,711.52 641.00,724.12 624.00,723.27" fill="#0b7816"/><polygon points="811.03,494.78 829.03,495.68 829.77,506.68 811.77,505.78" fill="#0b7816"/><polygon points="817.72,594.78 835.72,595.68 836.47,606.78 818.47,605.88" fill="#0b7816"/><polygon points="824.95,702.78 842.95,703.68 843.68,714.68 825.68,713.78" fill="#0b7816"/><polygon points="693.77,462.57 704.67,463.12 705.80,480.12 694.90,479.57" fill="#0b7816"/><polygon points="743.90,735.18 756.70,735.82 757.83,752.82 745.03,752.18" fill="#0b7816"/><polygon points="834.64,504.93 852.14,505.81 852.81,515.91 835.31,515.03" fill="#0b7816"/><polygon points="842.27,619.03 859.77,619.91 860.51,631.01 843.01,630.13" fill="#0b7816"/><polygon points="849.93,733.53 867.43,734.41 868.10,744.41 850.60,743.53" fill="#0b7816"/><polygon points="925.27,474.21 937.37,474.82 938.50,491.82 926.40,491.21" fill="#0b7816"/><polygon points="963.90,746.24 975.40,746.82 976.53,763.82 965.03,763.24" fill="#0b7816"/><polygon points="1008.42,522.45 1025.22,523.29 1025.97,534.49 1009.17,533.65" fill="#0b7816"/><polygon points="1014.46,612.65 1031.26,613.49 1032.10,625.99 1015.30,625.15" fill="#0b7816"/><polygon points="1020.82,707.75 1037.62,708.59 1038.38,719.89 1021.58,719.05" fill="#0b7816"/><polygon points="1030.07,580.84 1047.47,581.72 1048.23,593.12 1030.83,592.24" fill="#0b7816"/><polygon points="1038.21,702.44 1055.61,703.32 1056.48,716.32 1039.08,715.44" fill="#0b7816"/><polygon points="1023.67,485.14 1041.07,486.02 1041.80,497.02 1024.40,496.14" fill="#0b7816"/><polygon points="1157.57,485.90 1167.97,486.42 1169.10,503.42 1158.70,502.90" fill="#0b7816"/><polygon points="1103.16,754.25 1112.36,754.71 1113.43,770.71 1104.23,770.25" fill="#0b7816"/><polygon points="1201.29,562.84 1219.29,563.75 1219.89,572.75 1201.89,571.84" fill="#0b7816"/><polygon points="1207.11,649.84 1225.11,650.75 1226.24,667.75 1208.24,666.84" fill="#0b7816"/><polygon points="1225.11,650.75 1242.11,651.60 1242.94,664.10 1225.94,663.25" fill="#0b7816"/><polygon points="1231.13,740.75 1248.13,741.60 1249.00,754.60 1232.00,753.75" fill="#0b7816"/><polygon points="1394.96,624.41 1412.76,625.31 1413.23,632.31 1395.43,631.41" fill="#0b7816"/><polygon points="1400.45,706.41 1418.25,707.31 1418.89,716.81 1401.09,715.91" fill="#0b7816"/><polygon points="1412.28,618.01 1429.98,618.90 1430.62,628.60 1412.92,627.71" fill="#0b7816"/><polygon points="1418.25,707.31 1435.95,708.20 1436.69,719.20 1418.99,718.31" fill="#0b7816"/><polygon points="1487.02,588.18 1497.02,588.68 1498.09,604.68 1488.09,604.18" fill="#0b7816"/><polygon points="1570.02,592.35 1580.02,592.86 1581.09,608.86 1571.09,608.35" fill="#0b7816"/></g>
<polygon points="385.40,458.30 583.10,468.40 598.30,733.00 403.30,724.00" fill="#062a08" transform="translate(1.5,4)"/>
<polygon points="385.40,458.30 583.10,468.40 598.30,733.00 403.30,724.00" fill="#0b7816" stroke="#0a140a" stroke-width="2.2"/>
<polygon points="388.90,461.80 579.60,471.90 594.30,730.00 406.80,721.00" fill="none" stroke="#0a1a0b" stroke-width="1.9"/>
<polygon points="624.40,476.02 648.40,477.23 648.10,472.73 685.10,474.59 685.40,479.09 749.90,482.33 749.60,477.83 786.10,479.67 786.40,484.17 810.40,485.38 812.58,517.88 818.58,518.18 820.72,550.18 814.72,549.88 817.86,596.88 823.86,597.18 826.04,629.68 820.04,629.38 823.22,676.88 829.22,677.18 831.32,708.68 825.32,708.38 827.40,739.38 803.40,738.17 803.70,742.67 767.20,740.83 766.90,736.33 702.40,733.09 702.70,737.59 665.70,735.73 665.40,731.23 641.40,730.02 639.32,699.02 633.82,698.75 631.72,667.25 637.22,667.52 634.04,620.02 628.54,619.75 626.36,587.25 631.86,587.52 628.72,540.52 623.22,540.25 621.08,508.25 626.58,508.52" fill="none" stroke="#000" stroke-opacity="0.07" stroke-width="7" stroke-linejoin="round"/>
<polygon points="850.90,487.41 874.90,488.62 874.60,484.12 898.80,485.34 899.10,489.84 958.40,492.82 958.10,488.32 982.30,489.54 982.60,494.04 1006.60,495.25 1008.78,527.75 1003.78,527.49 1005.92,559.49 1010.92,559.75 1014.06,606.75 1009.06,606.49 1011.24,638.99 1016.24,639.25 1019.42,686.75 1014.42,686.49 1016.52,717.99 1021.52,718.25 1023.60,749.25 1000.30,748.07 1000.60,752.57 975.80,751.33 975.50,746.83 917.30,743.90 917.60,748.40 893.10,747.17 892.80,742.67 867.90,741.41" fill="none" stroke="#000" stroke-opacity="0.07" stroke-width="7" stroke-linejoin="round"/>
<polygon points="1041.80,497.02 1065.30,498.20 1065.00,493.70 1089.60,494.94 1089.90,499.44 1148.30,502.37 1148.00,497.87 1172.80,499.12 1173.10,503.62 1197.40,504.84 1199.58,537.34 1194.58,537.09 1196.72,569.09 1201.72,569.34 1204.86,616.34 1199.86,616.09 1202.04,648.59 1207.04,648.84 1210.22,696.34 1205.22,696.09 1207.32,727.59 1212.32,727.84 1214.46,759.84 1190.36,758.63 1190.67,763.13 1166.57,761.92 1166.26,757.42 1107.26,754.45 1107.57,758.95 1083.47,757.74 1083.16,753.24 1058.86,752.02" fill="none" stroke="#000" stroke-opacity="0.07" stroke-width="7" stroke-linejoin="round"/>
<polygon points="1238.10,591.70 1262.70,592.94 1263.07,598.44 1287.17,599.65 1286.80,594.15 1346.00,597.13 1346.37,602.63 1370.47,603.84 1370.10,598.34 1393.30,599.51 1395.06,625.91 1390.06,625.66 1392.20,657.56 1397.20,657.81 1401.06,715.51 1396.06,715.26 1398.23,747.76 1403.23,748.01 1405.07,775.41 1381.67,774.23 1381.30,768.73 1356.60,767.49 1356.97,772.99 1297.77,770.01 1297.40,764.51 1273.40,763.31 1273.77,768.81 1249.87,767.60" fill="none" stroke="#000" stroke-opacity="0.07" stroke-width="7" stroke-linejoin="round"/>
<polygon points="1428.76,600.80 1454.16,602.07 1454.53,607.57 1477.53,608.73 1477.16,603.23 1536.46,606.21 1536.83,611.71 1561.43,612.95 1561.06,607.45 1584.26,608.62 1585.98,634.22 1580.98,633.97 1583.22,667.47 1588.22,667.72 1592.05,725.02 1587.05,724.77 1589.19,756.77 1594.19,757.02 1596.07,785.02 1571.97,783.81 1571.60,778.31 1547.10,777.07 1547.47,782.57 1489.27,779.65 1488.90,774.15 1463.80,772.88 1464.17,778.38 1440.57,777.20" fill="none" stroke="#000" stroke-opacity="0.07" stroke-width="7" stroke-linejoin="round"/>
<polygon points="624.40,476.02 648.40,477.23 648.10,472.73 685.10,474.59 685.40,479.09 749.90,482.33 749.60,477.83 786.10,479.67 786.40,484.17 810.40,485.38 812.58,517.88 818.58,518.18 820.72,550.18 814.72,549.88 817.86,596.88 823.86,597.18 826.04,629.68 820.04,629.38 823.22,676.88 829.22,677.18 831.32,708.68 825.32,708.38 827.40,739.38 803.40,738.17 803.70,742.67 767.20,740.83 766.90,736.33 702.40,733.09 702.70,737.59 665.70,735.73 665.40,731.23 641.40,730.02 639.32,699.02 633.82,698.75 631.72,667.25 637.22,667.52 634.04,620.02 628.54,619.75 626.36,587.25 631.86,587.52 628.72,540.52 623.22,540.25 621.08,508.25 626.58,508.52" fill="#062a08" transform="translate(0.8,4)"/>
<polygon points="624.40,476.02 648.40,477.23 648.10,472.73 685.10,474.59 685.40,479.09 749.90,482.33 749.60,477.83 786.10,479.67 786.40,484.17 810.40,485.38 812.58,517.88 818.58,518.18 820.72,550.18 814.72,549.88 817.86,596.88 823.86,597.18 826.04,629.68 820.04,629.38 823.22,676.88 829.22,677.18 831.32,708.68 825.32,708.38 827.40,739.38 803.40,738.17 803.70,742.67 767.20,740.83 766.90,736.33 702.40,733.09 702.70,737.59 665.70,735.73 665.40,731.23 641.40,730.02 639.32,699.02 633.82,698.75 631.72,667.25 637.22,667.52 634.04,620.02 628.54,619.75 626.36,587.25 631.86,587.52 628.72,540.52 623.22,540.25 621.08,508.25 626.58,508.52" fill="#0b7816" stroke="#0a180b" stroke-width="1.9" stroke-linejoin="miter"/>
<polygon points="850.90,487.41 874.90,488.62 874.60,484.12 898.80,485.34 899.10,489.84 958.40,492.82 958.10,488.32 982.30,489.54 982.60,494.04 1006.60,495.25 1008.78,527.75 1003.78,527.49 1005.92,559.49 1010.92,559.75 1014.06,606.75 1009.06,606.49 1011.24,638.99 1016.24,639.25 1019.42,686.75 1014.42,686.49 1016.52,717.99 1021.52,718.25 1023.60,749.25 1000.30,748.07 1000.60,752.57 975.80,751.33 975.50,746.83 917.30,743.90 917.60,748.40 893.10,747.17 892.80,742.67 867.90,741.41" fill="#062a08" transform="translate(0.8,4)"/>
<polygon points="850.90,487.41 874.90,488.62 874.60,484.12 898.80,485.34 899.10,489.84 958.40,492.82 958.10,488.32 982.30,489.54 982.60,494.04 1006.60,495.25 1008.78,527.75 1003.78,527.49 1005.92,559.49 1010.92,559.75 1014.06,606.75 1009.06,606.49 1011.24,638.99 1016.24,639.25 1019.42,686.75 1014.42,686.49 1016.52,717.99 1021.52,718.25 1023.60,749.25 1000.30,748.07 1000.60,752.57 975.80,751.33 975.50,746.83 917.30,743.90 917.60,748.40 893.10,747.17 892.80,742.67 867.90,741.41" fill="#0b7816" stroke="#0a180b" stroke-width="1.9" stroke-linejoin="miter"/>
<polygon points="1041.80,497.02 1065.30,498.20 1065.00,493.70 1089.60,494.94 1089.90,499.44 1148.30,502.37 1148.00,497.87 1172.80,499.12 1173.10,503.62 1197.40,504.84 1199.58,537.34 1194.58,537.09 1196.72,569.09 1201.72,569.34 1204.86,616.34 1199.86,616.09 1202.04,648.59 1207.04,648.84 1210.22,696.34 1205.22,696.09 1207.32,727.59 1212.32,727.84 1214.46,759.84 1190.36,758.63 1190.67,763.13 1166.57,761.92 1166.26,757.42 1107.26,754.45 1107.57,758.95 1083.47,757.74 1083.16,753.24 1058.86,752.02" fill="#062a08" transform="translate(0.8,4)"/>
<polygon points="1041.80,497.02 1065.30,498.20 1065.00,493.70 1089.60,494.94 1089.90,499.44 1148.30,502.37 1148.00,497.87 1172.80,499.12 1173.10,503.62 1197.40,504.84 1199.58,537.34 1194.58,537.09 1196.72,569.09 1201.72,569.34 1204.86,616.34 1199.86,616.09 1202.04,648.59 1207.04,648.84 1210.22,696.34 1205.22,696.09 1207.32,727.59 1212.32,727.84 1214.46,759.84 1190.36,758.63 1190.67,763.13 1166.57,761.92 1166.26,757.42 1107.26,754.45 1107.57,758.95 1083.47,757.74 1083.16,753.24 1058.86,752.02" fill="#0b7816" stroke="#0a180b" stroke-width="1.9" stroke-linejoin="miter"/>
<polygon points="1238.10,591.70 1262.70,592.94 1263.07,598.44 1287.17,599.65 1286.80,594.15 1346.00,597.13 1346.37,602.63 1370.47,603.84 1370.10,598.34 1393.30,599.51 1395.06,625.91 1390.06,625.66 1392.20,657.56 1397.20,657.81 1401.06,715.51 1396.06,715.26 1398.23,747.76 1403.23,748.01 1405.07,775.41 1381.67,774.23 1381.30,768.73 1356.60,767.49 1356.97,772.99 1297.77,770.01 1297.40,764.51 1273.40,763.31 1273.77,768.81 1249.87,767.60" fill="#062a08" transform="translate(0.8,4)"/>
<polygon points="1238.10,591.70 1262.70,592.94 1263.07,598.44 1287.17,599.65 1286.80,594.15 1346.00,597.13 1346.37,602.63 1370.47,603.84 1370.10,598.34 1393.30,599.51 1395.06,625.91 1390.06,625.66 1392.20,657.56 1397.20,657.81 1401.06,715.51 1396.06,715.26 1398.23,747.76 1403.23,748.01 1405.07,775.41 1381.67,774.23 1381.30,768.73 1356.60,767.49 1356.97,772.99 1297.77,770.01 1297.40,764.51 1273.40,763.31 1273.77,768.81 1249.87,767.60" fill="#0b7816" stroke="#0a180b" stroke-width="1.9" stroke-linejoin="miter"/>
<polygon points="1428.76,600.80 1454.16,602.07 1454.53,607.57 1477.53,608.73 1477.16,603.23 1536.46,606.21 1536.83,611.71 1561.43,612.95 1561.06,607.45 1584.26,608.62 1585.98,634.22 1580.98,633.97 1583.22,667.47 1588.22,667.72 1592.05,725.02 1587.05,724.77 1589.19,756.77 1594.19,757.02 1596.07,785.02 1571.97,783.81 1571.60,778.31 1547.10,777.07 1547.47,782.57 1489.27,779.65 1488.90,774.15 1463.80,772.88 1464.17,778.38 1440.57,777.20" fill="#062a08" transform="translate(0.8,4)"/>
<polygon points="1428.76,600.80 1454.16,602.07 1454.53,607.57 1477.53,608.73 1477.16,603.23 1536.46,606.21 1536.83,611.71 1561.43,612.95 1561.06,607.45 1584.26,608.62 1585.98,634.22 1580.98,633.97 1583.22,667.47 1588.22,667.72 1592.05,725.02 1587.05,724.77 1589.19,756.77 1594.19,757.02 1596.07,785.02 1571.97,783.81 1571.60,778.31 1547.10,777.07 1547.47,782.57 1489.27,779.65 1488.90,774.15 1463.80,772.88 1464.17,778.38 1440.57,777.20" fill="#0b7816" stroke="#0a180b" stroke-width="1.9" stroke-linejoin="miter"/>
<ellipse cx="648.5" cy="478.7" rx="1.8" ry="2.4" fill="none" stroke="#10301a" stroke-width="1.1"/><ellipse cx="685.5" cy="480.6" rx="1.8" ry="2.4" fill="none" stroke="#10301a" stroke-width="1.1"/><ellipse cx="750.0" cy="483.8" rx="1.8" ry="2.4" fill="none" stroke="#10301a" stroke-width="1.1"/><ellipse cx="786.5" cy="485.7" rx="1.8" ry="2.4" fill="none" stroke="#10301a" stroke-width="1.1"/><ellipse cx="665.3" cy="729.7" rx="1.8" ry="2.4" fill="none" stroke="#10301a" stroke-width="1.1"/><ellipse cx="702.3" cy="731.6" rx="1.8" ry="2.4" fill="none" stroke="#10301a" stroke-width="1.1"/><ellipse cx="766.8" cy="734.8" rx="1.8" ry="2.4" fill="none" stroke="#10301a" stroke-width="1.1"/><ellipse cx="803.3" cy="736.7" rx="1.8" ry="2.4" fill="none" stroke="#10301a" stroke-width="1.1"/><ellipse cx="811.1" cy="517.8" rx="1.8" ry="2.4" fill="none" stroke="#10301a" stroke-width="1.1"/><ellipse cx="813.2" cy="549.8" rx="1.8" ry="2.4" fill="none" stroke="#10301a" stroke-width="1.1"/><ellipse cx="816.4" cy="596.8" rx="1.8" ry="2.4" fill="none" stroke="#10301a" stroke-width="1.1"/><ellipse cx="818.5" cy="629.3" rx="1.8" ry="2.4" fill="none" stroke="#10301a" stroke-width="1.1"/><ellipse cx="821.7" cy="676.8" rx="1.8" ry="2.4" fill="none" stroke="#10301a" stroke-width="1.1"/><ellipse cx="823.8" cy="708.3" rx="1.8" ry="2.4" fill="none" stroke="#10301a" stroke-width="1.1"/><ellipse cx="628.1" cy="508.6" rx="1.8" ry="2.4" fill="none" stroke="#10301a" stroke-width="1.1"/><ellipse cx="630.2" cy="540.6" rx="1.8" ry="2.4" fill="none" stroke="#10301a" stroke-width="1.1"/><ellipse cx="633.4" cy="587.6" rx="1.8" ry="2.4" fill="none" stroke="#10301a" stroke-width="1.1"/><ellipse cx="635.5" cy="620.1" rx="1.8" ry="2.4" fill="none" stroke="#10301a" stroke-width="1.1"/><ellipse cx="638.7" cy="667.6" rx="1.8" ry="2.4" fill="none" stroke="#10301a" stroke-width="1.1"/><ellipse cx="640.8" cy="699.1" rx="1.8" ry="2.4" fill="none" stroke="#10301a" stroke-width="1.1"/><ellipse cx="875.0" cy="490.1" rx="1.8" ry="2.4" fill="none" stroke="#10301a" stroke-width="1.1"/><ellipse cx="899.2" cy="491.3" rx="1.8" ry="2.4" fill="none" stroke="#10301a" stroke-width="1.1"/><ellipse cx="958.5" cy="494.3" rx="1.8" ry="2.4" fill="none" stroke="#10301a" stroke-width="1.1"/><ellipse cx="982.7" cy="495.5" rx="1.8" ry="2.4" fill="none" stroke="#10301a" stroke-width="1.1"/><ellipse cx="892.7" cy="741.2" rx="1.8" ry="2.4" fill="none" stroke="#10301a" stroke-width="1.1"/><ellipse cx="917.2" cy="742.4" rx="1.8" ry="2.4" fill="none" stroke="#10301a" stroke-width="1.1"/><ellipse cx="975.4" cy="745.3" rx="1.8" ry="2.4" fill="none" stroke="#10301a" stroke-width="1.1"/><ellipse cx="1000.2" cy="746.6" rx="1.8" ry="2.4" fill="none" stroke="#10301a" stroke-width="1.1"/><ellipse cx="1002.3" cy="527.4" rx="1.8" ry="2.4" fill="none" stroke="#10301a" stroke-width="1.1"/><ellipse cx="1004.4" cy="559.4" rx="1.8" ry="2.4" fill="none" stroke="#10301a" stroke-width="1.1"/><ellipse cx="1007.6" cy="606.4" rx="1.8" ry="2.4" fill="none" stroke="#10301a" stroke-width="1.1"/><ellipse cx="1009.7" cy="638.9" rx="1.8" ry="2.4" fill="none" stroke="#10301a" stroke-width="1.1"/><ellipse cx="1012.9" cy="686.4" rx="1.8" ry="2.4" fill="none" stroke="#10301a" stroke-width="1.1"/><ellipse cx="1015.0" cy="717.9" rx="1.8" ry="2.4" fill="none" stroke="#10301a" stroke-width="1.1"/><ellipse cx="1065.4" cy="499.7" rx="1.8" ry="2.4" fill="none" stroke="#10301a" stroke-width="1.1"/><ellipse cx="1090.0" cy="500.9" rx="1.8" ry="2.4" fill="none" stroke="#10301a" stroke-width="1.1"/><ellipse cx="1148.4" cy="503.9" rx="1.8" ry="2.4" fill="none" stroke="#10301a" stroke-width="1.1"/><ellipse cx="1173.2" cy="505.1" rx="1.8" ry="2.4" fill="none" stroke="#10301a" stroke-width="1.1"/><ellipse cx="1083.1" cy="751.7" rx="1.8" ry="2.4" fill="none" stroke="#10301a" stroke-width="1.1"/><ellipse cx="1107.2" cy="753.0" rx="1.8" ry="2.4" fill="none" stroke="#10301a" stroke-width="1.1"/><ellipse cx="1166.2" cy="755.9" rx="1.8" ry="2.4" fill="none" stroke="#10301a" stroke-width="1.1"/><ellipse cx="1190.3" cy="757.1" rx="1.8" ry="2.4" fill="none" stroke="#10301a" stroke-width="1.1"/><ellipse cx="1193.1" cy="537.0" rx="1.8" ry="2.4" fill="none" stroke="#10301a" stroke-width="1.1"/><ellipse cx="1195.2" cy="569.0" rx="1.8" ry="2.4" fill="none" stroke="#10301a" stroke-width="1.1"/><ellipse cx="1198.4" cy="616.0" rx="1.8" ry="2.4" fill="none" stroke="#10301a" stroke-width="1.1"/><ellipse cx="1200.5" cy="648.5" rx="1.8" ry="2.4" fill="none" stroke="#10301a" stroke-width="1.1"/><ellipse cx="1203.7" cy="696.0" rx="1.8" ry="2.4" fill="none" stroke="#10301a" stroke-width="1.1"/><ellipse cx="1205.8" cy="727.5" rx="1.8" ry="2.4" fill="none" stroke="#10301a" stroke-width="1.1"/><ellipse cx="1263.2" cy="599.9" rx="1.8" ry="2.4" fill="none" stroke="#10301a" stroke-width="1.1"/><ellipse cx="1287.3" cy="601.2" rx="1.8" ry="2.4" fill="none" stroke="#10301a" stroke-width="1.1"/><ellipse cx="1346.5" cy="604.1" rx="1.8" ry="2.4" fill="none" stroke="#10301a" stroke-width="1.1"/><ellipse cx="1370.6" cy="605.3" rx="1.8" ry="2.4" fill="none" stroke="#10301a" stroke-width="1.1"/><ellipse cx="1273.3" cy="761.8" rx="1.8" ry="2.4" fill="none" stroke="#10301a" stroke-width="1.1"/><ellipse cx="1297.3" cy="763.0" rx="1.8" ry="2.4" fill="none" stroke="#10301a" stroke-width="1.1"/><ellipse cx="1356.5" cy="766.0" rx="1.8" ry="2.4" fill="none" stroke="#10301a" stroke-width="1.1"/><ellipse cx="1381.2" cy="767.2" rx="1.8" ry="2.4" fill="none" stroke="#10301a" stroke-width="1.1"/><ellipse cx="1388.6" cy="625.6" rx="1.8" ry="2.4" fill="none" stroke="#10301a" stroke-width="1.1"/><ellipse cx="1390.7" cy="657.5" rx="1.8" ry="2.4" fill="none" stroke="#10301a" stroke-width="1.1"/><ellipse cx="1394.6" cy="715.2" rx="1.8" ry="2.4" fill="none" stroke="#10301a" stroke-width="1.1"/><ellipse cx="1396.7" cy="747.7" rx="1.8" ry="2.4" fill="none" stroke="#10301a" stroke-width="1.1"/><ellipse cx="1454.6" cy="609.1" rx="1.8" ry="2.4" fill="none" stroke="#10301a" stroke-width="1.1"/><ellipse cx="1477.6" cy="610.2" rx="1.8" ry="2.4" fill="none" stroke="#10301a" stroke-width="1.1"/><ellipse cx="1536.9" cy="613.2" rx="1.8" ry="2.4" fill="none" stroke="#10301a" stroke-width="1.1"/><ellipse cx="1561.5" cy="614.5" rx="1.8" ry="2.4" fill="none" stroke="#10301a" stroke-width="1.1"/><ellipse cx="1463.7" cy="771.4" rx="1.8" ry="2.4" fill="none" stroke="#10301a" stroke-width="1.1"/><ellipse cx="1488.8" cy="772.6" rx="1.8" ry="2.4" fill="none" stroke="#10301a" stroke-width="1.1"/><ellipse cx="1547.0" cy="775.6" rx="1.8" ry="2.4" fill="none" stroke="#10301a" stroke-width="1.1"/><ellipse cx="1571.5" cy="776.8" rx="1.8" ry="2.4" fill="none" stroke="#10301a" stroke-width="1.1"/><ellipse cx="1579.5" cy="633.9" rx="1.8" ry="2.4" fill="none" stroke="#10301a" stroke-width="1.1"/><ellipse cx="1581.7" cy="667.4" rx="1.8" ry="2.4" fill="none" stroke="#10301a" stroke-width="1.1"/><ellipse cx="1585.6" cy="724.7" rx="1.8" ry="2.4" fill="none" stroke="#10301a" stroke-width="1.1"/><ellipse cx="1587.7" cy="756.7" rx="1.8" ry="2.4" fill="none" stroke="#10301a" stroke-width="1.1"/>
<polyline points="628.30,508.30 648.30,475.50 785.50,481.40 811.70,518.30 825.00,708.30 805.00,735.00" fill="none" stroke="#f4f400" stroke-width="1.2"/>
<polyline points="628.30,508.30 641.70,695.00 666.70,730.00 703.30,730.70" fill="none" stroke="#f4f400" stroke-width="1.2"/>
<polyline points="805.00,735.00 999.70,745.90 1016.50,720.00 1004.30,525.70 982.90,490.60 874.30,486.00 785.00,481.70" fill="none" stroke="#f4f400" stroke-width="1.2"/>
<polyline points="982.90,490.60 1172.50,499.80 1195.40,534.90 1207.70,729.10 1190.90,755.10 1085.30,749.00 1262.30,598.00 1369.30,601.30 1392.00,627.20 1398.40,747.10 1382.20,766.60" fill="none" stroke="#f4f400" stroke-width="1.2"/>
<polyline points="1275.20,760.10 1573.50,774.70 1589.70,755.30 1581.60,633.70 1560.50,611.00 1455.20,605.50 1457.80,599.50" fill="none" stroke="#f4f400" stroke-width="1.2"/>
<path d="M703 729L707 719L711 715L711 726Z" fill="#22dd22"/>
<path d="M1457.5 599L1458 592Q1457 588 1460.5 587.5Q1464 588 1463 592Z" fill="#ff0000"/>
<circle cx="392.4" cy="736.3" r="8" fill="none" stroke="#b4b4b4" stroke-width="3.4"/>
<path d="M404.5 742L455 746" stroke="#ff0000" stroke-width="2.2"/><path d="M448 742.5L458 746.5L447.5 749Z" fill="#ff0000"/>
<path d="M404.5 742L401.5 700" stroke="#22dd22" stroke-width="1.8"/><path d="M398 703L401 694L404.5 702.5Z" fill="#22dd22"/>
<path d="M405 742L414 720" stroke="#0000ff" stroke-width="2"/><path d="M409.5 722L415 715.5L417 723.5Z" fill="#0000ff"/>
<text x="416.5" y="710.5" font-size="10" fill="#0000ee" font-family="Liberation Sans">Z</text>
<text x="470.5" y="750" font-size="9" fill="#ff6060" font-family="Liberation Sans">X</text></svg>
<div style="position:absolute;left:4px;top:145px;width:298px;height:22px;background:#f0f0f0;border:1px solid #c9c9c9"></div>
<svg style="position:absolute;left:9px;top:151px;overflow:visible;" width="11" height="9" viewBox="0 0 11 9"><path d="M5 0.5L0.5 4.5L5 8.5ZM10.5 0.5L6 4.5L10.5 8.5Z" fill="#222"/></svg>
<svg style="position:absolute;left:282px;top:151px;overflow:visible;" width="11" height="11" viewBox="0 0 11 11"><circle cx="5.5" cy="5.5" r="5" fill="#222"/><rect x="2.5" y="4.7" width="6" height="1.6" fill="#fff"/></svg>
<div style="position:absolute;left:300px;top:150px;width:1px;height:12px;background:#777"></div>
<div style="position:absolute;left:40px;top:174.3px;width:115px;height:19.5px;background:#eeeeee"></div>
<svg style="position:absolute;left:21px;top:178px" width="13" height="13"><defs><linearGradient id="tg" x1="0" y1="0" x2="1" y2="1"><stop offset="0" stop-color="#f0f0f0"/><stop offset="1" stop-color="#555"/></linearGradient></defs><path d="M1 11.5L11.2 1.2V11.5Z" fill="url(#tg)" stroke="#111" stroke-width="1.3" stroke-linejoin="round"/></svg>
<svg style="position:absolute;left:43px;top:178px" width="17" height="12"><path d="M0.3 6Q8.2 -2.2 16.2 6Q8.2 14.2 0.3 6Z" fill="#939393"/><circle cx="8.2" cy="6" r="2.5" fill="#939393" stroke="#efefef" stroke-width="1.3"/></svg>
<svg style="position:absolute;left:68px;top:175.5px" width="17" height="17"><path d="M0.7 2.5L2.3 0.7H8.8L9.8 1.7V7H13.8L16 9.2V14L14 16H1.8L0.7 14.8Z" fill="#e9ebee" stroke="#2a2a2a" stroke-width="1.05" stroke-linejoin="round"/><path d="M0.7 10.3H6.8V16M6.8 10.3L8.6 8.5H13.8V16M13.8 8.5L16 9.2M6.8 10.3V7M8.5 1.8V7" fill="none" stroke="#2a2a2a" stroke-width="0.9"/><rect x="1.5" y="3" width="6.5" height="6.5" fill="#dde1e7"/><rect x="7.5" y="11" width="5.6" height="4.3" fill="#dde1e7"/></svg>
<div style="position:absolute;left:58px;top:198.3px;width:82px;height:19.5px;background:#eeeeee"></div>
<svg style="position:absolute;left:61px;top:199.5px" width="17" height="17"><path d="M1.5 1H9.5L14 5V13H1.5Z" fill="#eeeeee" stroke="#333" stroke-width="1"/><path d="M9.5 1V5H14" fill="none" stroke="#333" stroke-width="0.9"/><rect x="0.5" y="12.5" width="14.5" height="3.5" fill="#f2b200" stroke="#8a5a00" stroke-width="0.7"/></svg>
<div style="position:absolute;left:58px;top:222.3px;width:110px;height:19.5px;background:#eeeeee"></div>
<svg style="position:absolute;left:40px;top:225px" width="12" height="15"><defs><linearGradient id="tc" x1="0" y1="0" x2="1" y2="0"><stop offset="0" stop-color="#e4e6ea"/><stop offset="1" stop-color="#f6f6f6"/></linearGradient></defs><path d="M1.2 1.2L9.8 7L1.2 12.8Z" fill="url(#tc)" stroke="#222" stroke-width="1.4" stroke-linejoin="round"/></svg>
<svg style="position:absolute;left:61px;top:225.5px" width="17" height="14"><path d="M0.5 1H6.5L7.5 2.5H16V13H0.5Z" fill="#8c8c8c"/><rect x="0.5" y="3.5" width="15.5" height="9.5" fill="#8f8f8f"/><path d="M0.5 2.6H7" stroke="#eee" stroke-width="0.8"/></svg>
<div style="position:absolute;left:58px;top:246.3px;width:102.69999999999999px;height:19.5px;background:#eeeeee"></div>
<svg style="position:absolute;left:40px;top:249px" width="12" height="15"><defs><linearGradient id="tc" x1="0" y1="0" x2="1" y2="0"><stop offset="0" stop-color="#e4e6ea"/><stop offset="1" stop-color="#f6f6f6"/></linearGradient></defs><path d="M1.2 1.2L9.8 7L1.2 12.8Z" fill="url(#tc)" stroke="#222" stroke-width="1.4" stroke-linejoin="round"/></svg>
<svg style="position:absolute;left:61px;top:250px" width="17" height="12"><path d="M0.7 6Q8.2 -1.6 15.8 6Q8.2 13.6 0.7 6Z" fill="none" stroke="#b0b0b0" stroke-width="1.1"/><circle cx="8.2" cy="6" r="2.5" fill="none" stroke="#b0b0b0" stroke-width="1.1"/><line x1="3" y1="0.5" x2="13.5" y2="11.5" stroke="#b0b0b0" stroke-width="1.1"/></svg>
<svg style="position:absolute;left:86px;top:247.5px" width="17" height="17"><path d="M0.7 2.5L2.3 0.7H8.8L9.8 1.7V7H13.8L16 9.2V14L14 16H1.8L0.7 14.8Z" fill="#e9ebee" stroke="#2a2a2a" stroke-width="1.05" stroke-linejoin="round"/><path d="M0.7 10.3H6.8V16M6.8 10.3L8.6 8.5H13.8V16M13.8 8.5L16 9.2M6.8 10.3V7M8.5 1.8V7" fill="none" stroke="#2a2a2a" stroke-width="0.9"/><rect x="1.5" y="3" width="6.5" height="6.5" fill="#dde1e7"/><rect x="7.5" y="11" width="5.6" height="4.3" fill="#dde1e7"/></svg>
<div style="position:absolute;left:58px;top:270.3px;width:149.7px;height:19.5px;background:#eeeeee"></div>
<svg style="position:absolute;left:40px;top:274px" width="13" height="13"><defs><linearGradient id="tg" x1="0" y1="0" x2="1" y2="1"><stop offset="0" stop-color="#f0f0f0"/><stop offset="1" stop-color="#555"/></linearGradient></defs><path d="M1 11.5L11.2 1.2V11.5Z" fill="url(#tg)" stroke="#111" stroke-width="1.3" stroke-linejoin="round"/></svg>
<svg style="position:absolute;left:61px;top:271.5px" width="17" height="17"><path d="M1.5 3.5L3.5 1.5H10V8H15.5V15.5H1.5Z" fill="#efefef" stroke="#444" stroke-width="1"/><path d="M1.5 9.5H9.5V15.5M9.5 9.5V3" fill="none" stroke="#444" stroke-width="0.9"/><circle cx="12.5" cy="4.5" r="2.6" fill="#fff" stroke="#444" stroke-width="1.6" stroke-dasharray="1.3 0.9"/></svg>
<div style="position:absolute;left:76px;top:294.3px;width:215.8px;height:19.5px;background:#eeeeee"></div>
<svg style="position:absolute;left:58px;top:298px" width="13" height="13"><defs><linearGradient id="tg" x1="0" y1="0" x2="1" y2="1"><stop offset="0" stop-color="#f0f0f0"/><stop offset="1" stop-color="#555"/></linearGradient></defs><path d="M1 11.5L11.2 1.2V11.5Z" fill="url(#tg)" stroke="#111" stroke-width="1.3" stroke-linejoin="round"/></svg>
<svg style="position:absolute;left:79px;top:298px" width="17" height="12"><path d="M0.3 6Q8.2 -2.2 16.2 6Q8.2 14.2 0.3 6Z" fill="#939393"/><circle cx="8.2" cy="6" r="2.5" fill="#939393" stroke="#efefef" stroke-width="1.3"/></svg>
<svg style="position:absolute;left:104px;top:295.5px" width="17" height="17"><path d="M1.5 3.5L3.5 1.5H10V8H15.5V15.5H1.5Z" fill="#efefef" stroke="#444" stroke-width="1"/><path d="M1.5 9.5H9.5V15.5M9.5 9.5V3" fill="none" stroke="#444" stroke-width="0.9"/><circle cx="12.5" cy="4.5" r="2.6" fill="#fff" stroke="#444" stroke-width="1.6" stroke-dasharray="1.3 0.9"/></svg>
<svg style="position:absolute;left:270.5px;top:297px" width="14" height="14"><circle cx="7" cy="7" r="5.6" fill="#fff" stroke="#222" stroke-width="1.2"/><circle cx="7" cy="7" r="2.3" fill="#222"/></svg>
<div style="position:absolute;left:94px;top:318.3px;width:115px;height:19.5px;background:#eeeeee"></div>
<svg style="position:absolute;left:76px;top:321px" width="12" height="15"><defs><linearGradient id="tc" x1="0" y1="0" x2="1" y2="0"><stop offset="0" stop-color="#e4e6ea"/><stop offset="1" stop-color="#f6f6f6"/></linearGradient></defs><path d="M1.2 1.2L9.8 7L1.2 12.8Z" fill="url(#tc)" stroke="#222" stroke-width="1.4" stroke-linejoin="round"/></svg>
<svg style="position:absolute;left:97px;top:322px" width="17" height="12"><path d="M0.3 6Q8.2 -2.2 16.2 6Q8.2 14.2 0.3 6Z" fill="#939393"/><circle cx="8.2" cy="6" r="2.5" fill="#939393" stroke="#efefef" stroke-width="1.3"/></svg>
<svg style="position:absolute;left:122px;top:321.5px" width="17" height="14"><path d="M0.5 1H6.5L7.5 2.5H16V13H0.5Z" fill="#8c8c8c"/><rect x="0.5" y="3.5" width="15.5" height="9.5" fill="#8f8f8f"/><path d="M0.5 2.6H7" stroke="#eee" stroke-width="0.8"/></svg>
<div style="position:absolute;left:94px;top:342.3px;width:126.5px;height:19.5px;background:#eeeeee"></div>
<svg style="position:absolute;left:76px;top:346px" width="13" height="13"><defs><linearGradient id="tg" x1="0" y1="0" x2="1" y2="1"><stop offset="0" stop-color="#f0f0f0"/><stop offset="1" stop-color="#555"/></linearGradient></defs><path d="M1 11.5L11.2 1.2V11.5Z" fill="url(#tg)" stroke="#111" stroke-width="1.3" stroke-linejoin="round"/></svg>
<svg style="position:absolute;left:97px;top:346px" width="17" height="12"><path d="M0.3 6Q8.2 -2.2 16.2 6Q8.2 14.2 0.3 6Z" fill="#939393"/><circle cx="8.2" cy="6" r="2.5" fill="#939393" stroke="#efefef" stroke-width="1.3"/></svg>
<svg style="position:absolute;left:122px;top:343.5px" width="17" height="17"><path d="M0.7 2.5L2.3 0.7H8.8L9.8 1.7V7H13.8L16 9.2V14L14 16H1.8L0.7 14.8Z" fill="#e9ebee" stroke="#2a2a2a" stroke-width="1.05" stroke-linejoin="round"/><path d="M0.7 10.3H6.8V16M6.8 10.3L8.6 8.5H13.8V16M13.8 8.5L16 9.2M6.8 10.3V7M8.5 1.8V7" fill="none" stroke="#2a2a2a" stroke-width="0.9"/><rect x="1.5" y="3" width="6.5" height="6.5" fill="#dde1e7"/><rect x="7.5" y="11" width="5.6" height="4.3" fill="#dde1e7"/></svg>
<div style="position:absolute;left:112px;top:366.3px;width:94.80000000000001px;height:19.5px;background:#eeeeee"></div>
<svg style="position:absolute;left:94px;top:369px" width="12" height="15"><defs><linearGradient id="tc" x1="0" y1="0" x2="1" y2="0"><stop offset="0" stop-color="#e4e6ea"/><stop offset="1" stop-color="#f6f6f6"/></linearGradient></defs><path d="M1.2 1.2L9.8 7L1.2 12.8Z" fill="url(#tc)" stroke="#222" stroke-width="1.4" stroke-linejoin="round"/></svg>
<svg style="position:absolute;left:115px;top:370px" width="17" height="12"><path d="M0.7 6Q8.2 -1.6 15.8 6Q8.2 13.6 0.7 6Z" fill="none" stroke="#b0b0b0" stroke-width="1.1"/><circle cx="8.2" cy="6" r="2.5" fill="none" stroke="#b0b0b0" stroke-width="1.1"/><line x1="3" y1="0.5" x2="13.5" y2="11.5" stroke="#b0b0b0" stroke-width="1.1"/></svg>
<svg style="position:absolute;left:140px;top:369.5px" width="17" height="14"><path d="M0.5 1H6.5L7.5 2.5H16V13H0.5Z" fill="#8c8c8c"/><rect x="0.5" y="3.5" width="15.5" height="9.5" fill="#8f8f8f"/><path d="M0.5 2.6H7" stroke="#eee" stroke-width="0.8"/></svg>
<div style="position:absolute;left:112px;top:390.3px;width:102.69999999999999px;height:19.5px;background:#eeeeee"></div>
<svg style="position:absolute;left:94px;top:394px" width="13" height="13"><defs><linearGradient id="tg" x1="0" y1="0" x2="1" y2="1"><stop offset="0" stop-color="#f0f0f0"/><stop offset="1" stop-color="#555"/></linearGradient></defs><path d="M1 11.5L11.2 1.2V11.5Z" fill="url(#tg)" stroke="#111" stroke-width="1.3" stroke-linejoin="round"/></svg>
<svg style="position:absolute;left:115px;top:394px" width="17" height="12"><path d="M0.3 6Q8.2 -2.2 16.2 6Q8.2 14.2 0.3 6Z" fill="#939393"/><circle cx="8.2" cy="6" r="2.5" fill="#939393" stroke="#efefef" stroke-width="1.3"/></svg>
<svg style="position:absolute;left:140px;top:391.5px" width="17" height="17"><path d="M0.7 2.5L2.3 0.7H8.8L9.8 1.7V7H13.8L16 9.2V14L14 16H1.8L0.7 14.8Z" fill="#e9ebee" stroke="#2a2a2a" stroke-width="1.05" stroke-linejoin="round"/><path d="M0.7 10.3H6.8V16M6.8 10.3L8.6 8.5H13.8V16M13.8 8.5L16 9.2M6.8 10.3V7M8.5 1.8V7" fill="none" stroke="#2a2a2a" stroke-width="0.9"/><rect x="1.5" y="3" width="6.5" height="6.5" fill="#dde1e7"/><rect x="7.5" y="11" width="5.6" height="4.3" fill="#dde1e7"/></svg>
<div style="position:absolute;left:130px;top:414.3px;width:94.80000000000001px;height:19.5px;background:#eeeeee"></div>
<svg style="position:absolute;left:112px;top:417px" width="12" height="15"><defs><linearGradient id="tc" x1="0" y1="0" x2="1" y2="0"><stop offset="0" stop-color="#e4e6ea"/><stop offset="1" stop-color="#f6f6f6"/></linearGradient></defs><path d="M1.2 1.2L9.8 7L1.2 12.8Z" fill="url(#tc)" stroke="#222" stroke-width="1.4" stroke-linejoin="round"/></svg>
<svg style="position:absolute;left:133px;top:418px" width="17" height="12"><path d="M0.7 6Q8.2 -1.6 15.8 6Q8.2 13.6 0.7 6Z" fill="none" stroke="#b0b0b0" stroke-width="1.1"/><circle cx="8.2" cy="6" r="2.5" fill="none" stroke="#b0b0b0" stroke-width="1.1"/><line x1="3" y1="0.5" x2="13.5" y2="11.5" stroke="#b0b0b0" stroke-width="1.1"/></svg>
<svg style="position:absolute;left:158px;top:417.5px" width="17" height="14"><path d="M0.5 1H6.5L7.5 2.5H16V13H0.5Z" fill="#8c8c8c"/><rect x="0.5" y="3.5" width="15.5" height="9.5" fill="#8f8f8f"/><path d="M0.5 2.6H7" stroke="#eee" stroke-width="0.8"/></svg>
<div style="position:absolute;left:130px;top:438.3px;width:115px;height:19.5px;background:#eeeeee"></div>
<svg style="position:absolute;left:112px;top:441px" width="12" height="15"><defs><linearGradient id="tc" x1="0" y1="0" x2="1" y2="0"><stop offset="0" stop-color="#e4e6ea"/><stop offset="1" stop-color="#f6f6f6"/></linearGradient></defs><path d="M1.2 1.2L9.8 7L1.2 12.8Z" fill="url(#tc)" stroke="#222" stroke-width="1.4" stroke-linejoin="round"/></svg>
<svg style="position:absolute;left:133px;top:442px" width="17" height="12"><path d="M0.3 6Q8.2 -2.2 16.2 6Q8.2 14.2 0.3 6Z" fill="#939393"/><circle cx="8.2" cy="6" r="2.5" fill="#939393" stroke="#efefef" stroke-width="1.3"/></svg>
<svg style="position:absolute;left:158px;top:441.5px" width="17" height="14"><path d="M0.5 1H6.5L7.5 2.5H16V13H0.5Z" fill="#8c8c8c"/><rect x="0.5" y="3.5" width="15.5" height="9.5" fill="#8f8f8f"/><path d="M0.5 2.6H7" stroke="#eee" stroke-width="0.8"/></svg>
<div style="position:absolute;left:130px;top:462.3px;width:123px;height:19.5px;background:#eeeeee"></div>
<svg style="position:absolute;left:112px;top:465px" width="12" height="15"><defs><linearGradient id="tc" x1="0" y1="0" x2="1" y2="0"><stop offset="0" stop-color="#e4e6ea"/><stop offset="1" stop-color="#f6f6f6"/></linearGradient></defs><path d="M1.2 1.2L9.8 7L1.2 12.8Z" fill="url(#tc)" stroke="#222" stroke-width="1.4" stroke-linejoin="round"/></svg>
<svg style="position:absolute;left:133px;top:466px" width="17" height="12"><path d="M0.3 6Q8.2 -2.2 16.2 6Q8.2 14.2 0.3 6Z" fill="#939393"/><circle cx="8.2" cy="6" r="2.5" fill="#939393" stroke="#efefef" stroke-width="1.3"/></svg>
<svg style="position:absolute;left:158px;top:464px" width="17" height="17"><path d="M0.6 3.8L3.9 0.6H15.4V12.2L12.2 15.4H0.6Z" fill="#f3f3f3" stroke="#2a2a2a" stroke-width="1.05" stroke-linejoin="round"/><rect x="1.2" y="4.3" width="10.6" height="10.6" fill="#dde1e8"/><path d="M12.2 4.3L14.9 1.4V12L12.2 14.8Z" fill="#c9cdd3"/><path d="M0.6 3.8H12.2V15.4M12.2 3.8L15.4 0.6" fill="none" stroke="#2a2a2a" stroke-width="0.8"/></svg>
<div style="position:absolute;left:130px;top:486.3px;width:106px;height:19.5px;background:#eeeeee"></div>
<svg style="position:absolute;left:112px;top:489px" width="12" height="15"><defs><linearGradient id="tc" x1="0" y1="0" x2="1" y2="0"><stop offset="0" stop-color="#e4e6ea"/><stop offset="1" stop-color="#f6f6f6"/></linearGradient></defs><path d="M1.2 1.2L9.8 7L1.2 12.8Z" fill="url(#tc)" stroke="#222" stroke-width="1.4" stroke-linejoin="round"/></svg>
<svg style="position:absolute;left:133px;top:490px" width="17" height="12"><path d="M0.3 6Q8.2 -2.2 16.2 6Q8.2 14.2 0.3 6Z" fill="#939393"/><circle cx="8.2" cy="6" r="2.5" fill="#939393" stroke="#efefef" stroke-width="1.3"/></svg>
<svg style="position:absolute;left:158px;top:488px" width="17" height="17"><path d="M0.6 3.8L3.9 0.6H15.4V12.2L12.2 15.4H0.6Z" fill="#f3f3f3" stroke="#2a2a2a" stroke-width="1.05" stroke-linejoin="round"/><rect x="1.2" y="4.3" width="10.6" height="10.6" fill="#dde1e8"/><path d="M12.2 4.3L14.9 1.4V12L12.2 14.8Z" fill="#c9cdd3"/><path d="M0.6 3.8H12.2V15.4M12.2 3.8L15.4 0.6" fill="none" stroke="#2a2a2a" stroke-width="0.8"/></svg>
<div style="position:absolute;left:112px;top:510.3px;width:107px;height:19.5px;background:#eeeeee"></div>
<svg style="position:absolute;left:94px;top:514px" width="13" height="13"><defs><linearGradient id="tg" x1="0" y1="0" x2="1" y2="1"><stop offset="0" stop-color="#f0f0f0"/><stop offset="1" stop-color="#555"/></linearGradient></defs><path d="M1 11.5L11.2 1.2V11.5Z" fill="url(#tg)" stroke="#111" stroke-width="1.3" stroke-linejoin="round"/></svg>
<svg style="position:absolute;left:115px;top:514px" width="17" height="12"><path d="M0.3 6Q8.2 -2.2 16.2 6Q8.2 14.2 0.3 6Z" fill="#939393"/><circle cx="8.2" cy="6" r="2.5" fill="#939393" stroke="#efefef" stroke-width="1.3"/></svg>
<svg style="position:absolute;left:140px;top:511.5px" width="17" height="17"><path d="M0.7 2.5L2.3 0.7H8.8L9.8 1.7V7H13.8L16 9.2V14L14 16H1.8L0.7 14.8Z" fill="#e9ebee" stroke="#2a2a2a" stroke-width="1.05" stroke-linejoin="round"/><path d="M0.7 10.3H6.8V16M6.8 10.3L8.6 8.5H13.8V16M13.8 8.5L16 9.2M6.8 10.3V7M8.5 1.8V7" fill="none" stroke="#2a2a2a" stroke-width="0.9"/><rect x="1.5" y="3" width="6.5" height="6.5" fill="#dde1e7"/><rect x="7.5" y="11" width="5.6" height="4.3" fill="#dde1e7"/></svg>
<div style="position:absolute;left:130px;top:534.3px;width:94.80000000000001px;height:19.5px;background:#eeeeee"></div>
<svg style="position:absolute;left:112px;top:537px" width="12" height="15"><defs><linearGradient id="tc" x1="0" y1="0" x2="1" y2="0"><stop offset="0" stop-color="#e4e6ea"/><stop offset="1" stop-color="#f6f6f6"/></linearGradient></defs><path d="M1.2 1.2L9.8 7L1.2 12.8Z" fill="url(#tc)" stroke="#222" stroke-width="1.4" stroke-linejoin="round"/></svg>
<svg style="position:absolute;left:133px;top:538px" width="17" height="12"><path d="M0.7 6Q8.2 -1.6 15.8 6Q8.2 13.6 0.7 6Z" fill="none" stroke="#b0b0b0" stroke-width="1.1"/><circle cx="8.2" cy="6" r="2.5" fill="none" stroke="#b0b0b0" stroke-width="1.1"/><line x1="3" y1="0.5" x2="13.5" y2="11.5" stroke="#b0b0b0" stroke-width="1.1"/></svg>
<svg style="position:absolute;left:158px;top:537.5px" width="17" height="14"><path d="M0.5 1H6.5L7.5 2.5H16V13H0.5Z" fill="#8c8c8c"/><rect x="0.5" y="3.5" width="15.5" height="9.5" fill="#8f8f8f"/><path d="M0.5 2.6H7" stroke="#eee" stroke-width="0.8"/></svg>
<div style="position:absolute;left:130px;top:558.3px;width:115px;height:19.5px;background:#eeeeee"></div>
<svg style="position:absolute;left:112px;top:561px" width="12" height="15"><defs><linearGradient id="tc" x1="0" y1="0" x2="1" y2="0"><stop offset="0" stop-color="#e4e6ea"/><stop offset="1" stop-color="#f6f6f6"/></linearGradient></defs><path d="M1.2 1.2L9.8 7L1.2 12.8Z" fill="url(#tc)" stroke="#222" stroke-width="1.4" stroke-linejoin="round"/></svg>
<svg style="position:absolute;left:133px;top:562px" width="17" height="12"><path d="M0.3 6Q8.2 -2.2 16.2 6Q8.2 14.2 0.3 6Z" fill="#939393"/><circle cx="8.2" cy="6" r="2.5" fill="#939393" stroke="#efefef" stroke-width="1.3"/></svg>
<svg style="position:absolute;left:158px;top:561.5px" width="17" height="14"><path d="M0.5 1H6.5L7.5 2.5H16V13H0.5Z" fill="#8c8c8c"/><rect x="0.5" y="3.5" width="15.5" height="9.5" fill="#8f8f8f"/><path d="M0.5 2.6H7" stroke="#eee" stroke-width="0.8"/></svg>
<div style="position:absolute;left:130px;top:582.3px;width:123px;height:19.5px;background:#eeeeee"></div>
<svg style="position:absolute;left:112px;top:585px" width="12" height="15"><defs><linearGradient id="tc" x1="0" y1="0" x2="1" y2="0"><stop offset="0" stop-color="#e4e6ea"/><stop offset="1" stop-color="#f6f6f6"/></linearGradient></defs><path d="M1.2 1.2L9.8 7L1.2 12.8Z" fill="url(#tc)" stroke="#222" stroke-width="1.4" stroke-linejoin="round"/></svg>
<svg style="position:absolute;left:133px;top:586px" width="17" height="12"><path d="M0.3 6Q8.2 -2.2 16.2 6Q8.2 14.2 0.3 6Z" fill="#939393"/><circle cx="8.2" cy="6" r="2.5" fill="#939393" stroke="#efefef" stroke-width="1.3"/></svg>
<svg style="position:absolute;left:158px;top:584px" width="17" height="17"><path d="M0.6 3.8L3.9 0.6H15.4V12.2L12.2 15.4H0.6Z" fill="#f3f3f3" stroke="#2a2a2a" stroke-width="1.05" stroke-linejoin="round"/><rect x="1.2" y="4.3" width="10.6" height="10.6" fill="#dde1e8"/><path d="M12.2 4.3L14.9 1.4V12L12.2 14.8Z" fill="#c9cdd3"/><path d="M0.6 3.8H12.2V15.4M12.2 3.8L15.4 0.6" fill="none" stroke="#2a2a2a" stroke-width="0.8"/></svg>
<div style="position:absolute;left:130px;top:606.3px;width:106px;height:19.5px;background:#eeeeee"></div>
<svg style="position:absolute;left:112px;top:609px" width="12" height="15"><defs><linearGradient id="tc" x1="0" y1="0" x2="1" y2="0"><stop offset="0" stop-color="#e4e6ea"/><stop offset="1" stop-color="#f6f6f6"/></linearGradient></defs><path d="M1.2 1.2L9.8 7L1.2 12.8Z" fill="url(#tc)" stroke="#222" stroke-width="1.4" stroke-linejoin="round"/></svg>
<svg style="position:absolute;left:133px;top:610px" width="17" height="12"><path d="M0.3 6Q8.2 -2.2 16.2 6Q8.2 14.2 0.3 6Z" fill="#939393"/><circle cx="8.2" cy="6" r="2.5" fill="#939393" stroke="#efefef" stroke-width="1.3"/></svg>
<svg style="position:absolute;left:158px;top:608px" width="17" height="17"><path d="M0.6 3.8L3.9 0.6H15.4V12.2L12.2 15.4H0.6Z" fill="#f3f3f3" stroke="#2a2a2a" stroke-width="1.05" stroke-linejoin="round"/><rect x="1.2" y="4.3" width="10.6" height="10.6" fill="#dde1e8"/><path d="M12.2 4.3L14.9 1.4V12L12.2 14.8Z" fill="#c9cdd3"/><path d="M0.6 3.8H12.2V15.4M12.2 3.8L15.4 0.6" fill="none" stroke="#2a2a2a" stroke-width="0.8"/></svg>
<div style="position:absolute;left:112px;top:630.3px;width:107px;height:19.5px;background:#eeeeee"></div>
<svg style="position:absolute;left:94px;top:633px" width="12" height="15"><defs><linearGradient id="tc" x1="0" y1="0" x2="1" y2="0"><stop offset="0" stop-color="#e4e6ea"/><stop offset="1" stop-color="#f6f6f6"/></linearGradient></defs><path d="M1.2 1.2L9.8 7L1.2 12.8Z" fill="url(#tc)" stroke="#222" stroke-width="1.4" stroke-linejoin="round"/></svg>
<svg style="position:absolute;left:115px;top:634px" width="17" height="12"><path d="M0.3 6Q8.2 -2.2 16.2 6Q8.2 14.2 0.3 6Z" fill="#939393"/><circle cx="8.2" cy="6" r="2.5" fill="#939393" stroke="#efefef" stroke-width="1.3"/></svg>
<svg style="position:absolute;left:140px;top:632px" width="17" height="17"><path d="M0.6 3.8L3.9 0.6H15.4V12.2L12.2 15.4H0.6Z" fill="#f3f3f3" stroke="#2a2a2a" stroke-width="1.05" stroke-linejoin="round"/><rect x="1.2" y="4.3" width="10.6" height="10.6" fill="#dde1e8"/><path d="M12.2 4.3L14.9 1.4V12L12.2 14.8Z" fill="#c9cdd3"/><path d="M0.6 3.8H12.2V15.4M12.2 3.8L15.4 0.6" fill="none" stroke="#2a2a2a" stroke-width="0.8"/></svg>
<div style="position:absolute;left:112px;top:654.3px;width:94px;height:19.5px;background:#eeeeee"></div>
<svg style="position:absolute;left:94px;top:657px" width="12" height="15"><defs><linearGradient id="tc" x1="0" y1="0" x2="1" y2="0"><stop offset="0" stop-color="#e4e6ea"/><stop offset="1" stop-color="#f6f6f6"/></linearGradient></defs><path d="M1.2 1.2L9.8 7L1.2 12.8Z" fill="url(#tc)" stroke="#222" stroke-width="1.4" stroke-linejoin="round"/></svg>
<svg style="position:absolute;left:115px;top:658px" width="17" height="12"><path d="M0.3 6Q8.2 -2.2 16.2 6Q8.2 14.2 0.3 6Z" fill="#939393"/><circle cx="8.2" cy="6" r="2.5" fill="#939393" stroke="#efefef" stroke-width="1.3"/></svg>
<svg style="position:absolute;left:140px;top:656px" width="17" height="17"><path d="M0.6 3.8L3.9 0.6H15.4V12.2L12.2 15.4H0.6Z" fill="#f3f3f3" stroke="#2a2a2a" stroke-width="1.05" stroke-linejoin="round"/><rect x="1.2" y="4.3" width="10.6" height="10.6" fill="#dde1e8"/><path d="M12.2 4.3L14.9 1.4V12L12.2 14.8Z" fill="#c9cdd3"/><path d="M0.6 3.8H12.2V15.4M12.2 3.8L15.4 0.6" fill="none" stroke="#2a2a2a" stroke-width="0.8"/></svg>
<div style="position:absolute;left:58px;top:678.3px;width:106px;height:19.5px;background:#eeeeee"></div>
<svg style="position:absolute;left:40px;top:681px" width="12" height="15"><defs><linearGradient id="tc" x1="0" y1="0" x2="1" y2="0"><stop offset="0" stop-color="#e4e6ea"/><stop offset="1" stop-color="#f6f6f6"/></linearGradient></defs><path d="M1.2 1.2L9.8 7L1.2 12.8Z" fill="url(#tc)" stroke="#222" stroke-width="1.4" stroke-linejoin="round"/></svg>
<svg style="position:absolute;left:61px;top:679px" width="17" height="17"><rect x="1.5" y="1.5" width="13" height="15" fill="#f4f4f4" stroke="#333" stroke-width="1"/><text x="8" y="7" font-size="5" font-weight="700" fill="#2a8fe0" text-anchor="middle" font-family="Liberation Sans">G</text><rect x="3.5" y="9" width="2" height="2" fill="#333"/><rect x="3.5" y="12.5" width="2" height="2" fill="#333"/><path d="M6.5 10H12.5M6.5 13.5H12.5" stroke="#333" stroke-width="0.9"/></svg>
<div style="position:absolute;left:58px;top:702.3px;width:102.69999999999999px;height:19.5px;background:#eeeeee"></div>
<svg style="position:absolute;left:40px;top:706px" width="13" height="13"><defs><linearGradient id="tg" x1="0" y1="0" x2="1" y2="1"><stop offset="0" stop-color="#f0f0f0"/><stop offset="1" stop-color="#555"/></linearGradient></defs><path d="M1 11.5L11.2 1.2V11.5Z" fill="url(#tg)" stroke="#111" stroke-width="1.3" stroke-linejoin="round"/></svg>
<svg style="position:absolute;left:61px;top:706px" width="17" height="12"><path d="M0.3 6Q8.2 -2.2 16.2 6Q8.2 14.2 0.3 6Z" fill="#939393"/><circle cx="8.2" cy="6" r="2.5" fill="#939393" stroke="#efefef" stroke-width="1.3"/></svg>
<svg style="position:absolute;left:86px;top:704px" width="20" height="18"><path d="M1.5 13V2H6.5L8 3.5H12V6" fill="#f3f3f3" stroke="#444" stroke-width="0.9"/><path d="M1.5 13L4 6.5H16L13 13Z" fill="#f3f3f3" stroke="#444" stroke-width="0.9"/><circle cx="9" cy="5.5" r="3" fill="#d6e6f5" stroke="#444" stroke-width="0.8"/><path d="M1 16.5L3 14.5M4 16.5L6 14.5M7 16.5L9 14.5M10 16.5L12 14.5M13 16.5L15 14.5M16 16.5L18 14.5" stroke="#4a6e9c" stroke-width="1.3"/></svg>
<svg style="position:absolute;left:83px;top:716px" width="76" height="4"><path d="M0.0 3.5L3.0 0.5" stroke="#4a6e9c" stroke-width="1.4"/><path d="M5.0 3.5L8.0 0.5" stroke="#4a6e9c" stroke-width="1.4"/><path d="M10.0 3.5L13.0 0.5" stroke="#4a6e9c" stroke-width="1.4"/><path d="M15.0 3.5L18.0 0.5" stroke="#4a6e9c" stroke-width="1.4"/><path d="M20.0 3.5L23.0 0.5" stroke="#4a6e9c" stroke-width="1.4"/><path d="M25.0 3.5L28.0 0.5" stroke="#4a6e9c" stroke-width="1.4"/><path d="M30.0 3.5L33.0 0.5" stroke="#4a6e9c" stroke-width="1.4"/><path d="M35.0 3.5L38.0 0.5" stroke="#4a6e9c" stroke-width="1.4"/><path d="M40.0 3.5L43.0 0.5" stroke="#4a6e9c" stroke-width="1.4"/><path d="M45.0 3.5L48.0 0.5" stroke="#4a6e9c" stroke-width="1.4"/><path d="M50.0 3.5L53.0 0.5" stroke="#4a6e9c" stroke-width="1.4"/><path d="M55.0 3.5L58.0 0.5" stroke="#4a6e9c" stroke-width="1.4"/><path d="M60.0 3.5L63.0 0.5" stroke="#4a6e9c" stroke-width="1.4"/><path d="M65.0 3.5L68.0 0.5" stroke="#4a6e9c" stroke-width="1.4"/><path d="M70.0 3.5L73.0 0.5" stroke="#4a6e9c" stroke-width="1.4"/></svg>
<div style="position:absolute;left:76px;top:726.3px;width:156.8px;height:19.5px;background:#eeeeee"></div>
<svg style="position:absolute;left:58px;top:730px" width="13" height="13"><defs><linearGradient id="tg" x1="0" y1="0" x2="1" y2="1"><stop offset="0" stop-color="#f0f0f0"/><stop offset="1" stop-color="#555"/></linearGradient></defs><path d="M1 11.5L11.2 1.2V11.5Z" fill="url(#tg)" stroke="#111" stroke-width="1.3" stroke-linejoin="round"/></svg>
<svg style="position:absolute;left:79px;top:730px" width="17" height="12"><path d="M0.3 6Q8.2 -2.2 16.2 6Q8.2 14.2 0.3 6Z" fill="#939393"/><circle cx="8.2" cy="6" r="2.5" fill="#939393" stroke="#efefef" stroke-width="1.3"/></svg>
<svg style="position:absolute;left:105px;top:728px" width="16" height="16"><circle cx="8" cy="8" r="6.6" fill="none" stroke="#6cc04a" stroke-width="1.2"/><path d="M4.8 8.2L7.2 10.6L11.2 5.6" fill="none" stroke="#6cc04a" stroke-width="1.3"/></svg>
<svg style="position:absolute;left:129px;top:728px" width="20" height="18"><path d="M1.5 13V2H6.5L8 3.5H12V6" fill="#f3f3f3" stroke="#444" stroke-width="0.9"/><path d="M1.5 13L4 6.5H16L13 13Z" fill="#f3f3f3" stroke="#444" stroke-width="0.9"/><circle cx="9" cy="5.5" r="3" fill="#d6e6f5" stroke="#444" stroke-width="0.8"/><path d="M1 16.5L3 14.5M4 16.5L6 14.5M7 16.5L9 14.5M10 16.5L12 14.5M13 16.5L15 14.5M16 16.5L18 14.5" stroke="#4a6e9c" stroke-width="1.3"/></svg>
<div style="position:absolute;left:151px;top:728px;width:57px;height:16px;background:#8c8c8c"></div>
<svg style="position:absolute;left:211.5px;top:729px" width="14" height="14"><circle cx="7" cy="7" r="5.6" fill="#fff" stroke="#222" stroke-width="1.2"/><circle cx="7" cy="7" r="2.3" fill="#222"/></svg>
<svg style="position:absolute;left:126px;top:740.5px" width="82" height="4"><path d="M0.0 3.5L3.0 0.5" stroke="#4a6e9c" stroke-width="1.4"/><path d="M5.0 3.5L8.0 0.5" stroke="#4a6e9c" stroke-width="1.4"/><path d="M10.0 3.5L13.0 0.5" stroke="#4a6e9c" stroke-width="1.4"/><path d="M15.0 3.5L18.0 0.5" stroke="#4a6e9c" stroke-width="1.4"/><path d="M20.0 3.5L23.0 0.5" stroke="#4a6e9c" stroke-width="1.4"/><path d="M25.0 3.5L28.0 0.5" stroke="#4a6e9c" stroke-width="1.4"/><path d="M30.0 3.5L33.0 0.5" stroke="#4a6e9c" stroke-width="1.4"/><path d="M35.0 3.5L38.0 0.5" stroke="#4a6e9c" stroke-width="1.4"/><path d="M40.0 3.5L43.0 0.5" stroke="#4a6e9c" stroke-width="1.4"/><path d="M45.0 3.5L48.0 0.5" stroke="#4a6e9c" stroke-width="1.4"/><path d="M50.0 3.5L53.0 0.5" stroke="#4a6e9c" stroke-width="1.4"/><path d="M55.0 3.5L58.0 0.5" stroke="#4a6e9c" stroke-width="1.4"/><path d="M60.0 3.5L63.0 0.5" stroke="#4a6e9c" stroke-width="1.4"/><path d="M65.0 3.5L68.0 0.5" stroke="#4a6e9c" stroke-width="1.4"/><path d="M70.0 3.5L73.0 0.5" stroke="#4a6e9c" stroke-width="1.4"/><path d="M75.0 3.5L78.0 0.5" stroke="#4a6e9c" stroke-width="1.4"/></svg>
<div style="position:absolute;left:94px;top:750.3px;width:180px;height:19.5px;background:#eeeeee"></div>
<svg style="position:absolute;left:76px;top:753px" width="12" height="15"><defs><linearGradient id="tc" x1="0" y1="0" x2="1" y2="0"><stop offset="0" stop-color="#e4e6ea"/><stop offset="1" stop-color="#f6f6f6"/></linearGradient></defs><path d="M1.2 1.2L9.8 7L1.2 12.8Z" fill="url(#tc)" stroke="#222" stroke-width="1.4" stroke-linejoin="round"/></svg>
<svg style="position:absolute;left:97px;top:754px" width="17" height="12"><path d="M0.7 6Q8.2 -1.6 15.8 6Q8.2 13.6 0.7 6Z" fill="none" stroke="#b0b0b0" stroke-width="1.1"/><circle cx="8.2" cy="6" r="2.5" fill="none" stroke="#b0b0b0" stroke-width="1.1"/><line x1="3" y1="0.5" x2="13.5" y2="11.5" stroke="#b0b0b0" stroke-width="1.1"/></svg>
<svg style="position:absolute;left:123px;top:752px" width="16" height="16"><circle cx="8" cy="8" r="6.6" fill="none" stroke="#6cc04a" stroke-width="1.2"/><path d="M4.8 8.2L7.2 10.6L11.2 5.6" fill="none" stroke="#6cc04a" stroke-width="1.3"/></svg>
<svg style="position:absolute;left:147px;top:751.5px" width="17" height="17"><path d="M8.5 1L16 8.5L8.5 16L1 8.5Z" fill="#e8e8e8" stroke="#444" stroke-width="1"/><path d="M3 8.5Q8.5 3 14 8.5Q8.5 13.5 3 8.5Z" fill="#4a9fe0"/><path d="M4.5 9Q8.5 6 12.5 9" fill="none" stroke="#0d3f73" stroke-width="1"/></svg>
<div style="position:absolute;left:94px;top:774.3px;width:176px;height:19.5px;background:#eeeeee"></div>
<svg style="position:absolute;left:76px;top:777px" width="12" height="15"><defs><linearGradient id="tc" x1="0" y1="0" x2="1" y2="0"><stop offset="0" stop-color="#e4e6ea"/><stop offset="1" stop-color="#f6f6f6"/></linearGradient></defs><path d="M1.2 1.2L9.8 7L1.2 12.8Z" fill="url(#tc)" stroke="#222" stroke-width="1.4" stroke-linejoin="round"/></svg>
<svg style="position:absolute;left:97px;top:778px" width="17" height="12"><path d="M0.7 6Q8.2 -1.6 15.8 6Q8.2 13.6 0.7 6Z" fill="none" stroke="#b0b0b0" stroke-width="1.1"/><circle cx="8.2" cy="6" r="2.5" fill="none" stroke="#b0b0b0" stroke-width="1.1"/><line x1="3" y1="0.5" x2="13.5" y2="11.5" stroke="#b0b0b0" stroke-width="1.1"/></svg>
<svg style="position:absolute;left:123px;top:776px" width="16" height="16"><circle cx="8" cy="8" r="6.6" fill="none" stroke="#6cc04a" stroke-width="1.2"/><path d="M4.8 8.2L7.2 10.6L11.2 5.6" fill="none" stroke="#6cc04a" stroke-width="1.3"/></svg>
<svg style="position:absolute;left:147px;top:775.5px" width="17" height="17"><path d="M8.5 1L15 7.5L8.5 12.5L2 7.5Z" fill="#f4f4f4" stroke="#444" stroke-width="0.9"/><path d="M2 7.5L8.5 12.5L15 7.5V9.5L8.5 14.5L2 9.5Z" fill="#6aaee8"/><path d="M0.8 9.5L8.5 16L16.2 9.5" fill="none" stroke="#2a8fe0" stroke-width="1.1"/></svg>
<div style="position:absolute;left:94px;top:798.3px;width:208px;height:19.5px;background:#eeeeee"></div>
<svg style="position:absolute;left:76px;top:801px" width="12" height="15"><defs><linearGradient id="tc" x1="0" y1="0" x2="1" y2="0"><stop offset="0" stop-color="#e4e6ea"/><stop offset="1" stop-color="#f6f6f6"/></linearGradient></defs><path d="M1.2 1.2L9.8 7L1.2 12.8Z" fill="url(#tc)" stroke="#222" stroke-width="1.4" stroke-linejoin="round"/></svg>
<svg style="position:absolute;left:97px;top:802px" width="17" height="12"><path d="M0.7 6Q8.2 -1.6 15.8 6Q8.2 13.6 0.7 6Z" fill="none" stroke="#b0b0b0" stroke-width="1.1"/><circle cx="8.2" cy="6" r="2.5" fill="none" stroke="#b0b0b0" stroke-width="1.1"/><line x1="3" y1="0.5" x2="13.5" y2="11.5" stroke="#b0b0b0" stroke-width="1.1"/></svg>
<svg style="position:absolute;left:123px;top:800px" width="16" height="16"><circle cx="8" cy="8" r="6.6" fill="none" stroke="#6cc04a" stroke-width="1.2"/><path d="M4.8 8.2L7.2 10.6L11.2 5.6" fill="none" stroke="#6cc04a" stroke-width="1.3"/></svg>
<svg style="position:absolute;left:147px;top:799px" width="18" height="18"><path d="M1 10L5 6H17L13 10Z" fill="#eaeaea" stroke="#fff" stroke-width="1"/><rect x="7" y="1" width="4.5" height="16" rx="2" fill="#d5d5d5" stroke="#fff" stroke-width="1"/></svg>
<div style="position:absolute;left:144px;top:798px;width:158px;height:20px;background:#0696d7"></div>
<svg style="position:absolute;left:147px;top:799px" width="18" height="18"><path d="M1 10L5 6H17L13 10Z" fill="#eaeaea" stroke="#fff" stroke-width="1"/><rect x="7" y="1" width="4.5" height="16" rx="2" fill="#d5d5d5" stroke="#fff" stroke-width="1"/></svg>
<div style="position:absolute;left:4px;top:1011px;width:298px;height:23px;background:#f0f0f0;border:1px solid #c9c9c9"></div>
<svg style="position:absolute;left:282px;top:1018px;overflow:visible;" width="11" height="11" viewBox="0 0 11 11"><circle cx="5.5" cy="5.5" r="5" fill="#222"/><path d="M2.5 5.5H8.5M5.5 2.5V8.5" stroke="#fff" stroke-width="1.5"/></svg>
<div style="position:absolute;left:300px;top:1017px;width:1px;height:12px;background:#777"></div>
<div style="position:absolute;left:157px;top:131px;width:135px;height:21px;background:#4c4c4c;border-radius:10px"></div>
<div style="position:absolute;left:748px;top:1012px;width:423px;height:24px;background:#efefef"></div>
<svg style="position:absolute;left:0;top:0" width="1920" height="1080"><g transform="translate(750,1015)"><ellipse cx="9" cy="9" rx="7.5" ry="5" fill="none" stroke="#555" stroke-width="1"/><ellipse cx="9" cy="9" rx="3" ry="7.5" fill="none" stroke="#555" stroke-width="1"/><circle cx="9" cy="9" r="1.6" fill="#1e88e5"/></g><g transform="translate(783,1015)"><rect x="2" y="7" width="14" height="9" fill="none" stroke="#555" stroke-width="1.3"/><rect x="5" y="10" width="8" height="3" fill="none" stroke="#555" stroke-width="1"/><path d="M4 5L6 2M9 5V1.5M14 5L12 2" stroke="#555"/></g><g transform="translate(808,1015)"><path d="M5 16L2.5 10Q2 8.5 3.5 8.5L5.5 11V3.5Q6 2 7 3.5V9V2Q8 0.5 9 2V9V3Q10 1.8 11 3V9.5V5Q12 3.8 13 5V12Q13 16 10 16.5Z" fill="#fff" stroke="#444" stroke-width="1"/></g><g transform="translate(834,1015)"><circle cx="7" cy="9" r="4.6" fill="none" stroke="#333" stroke-width="1.5"/><path d="M10.5 12.5L14 16" stroke="#333" stroke-width="2.2"/><path d="M13 2V7M10.5 4.5H15.5M10.5 8H15.5" stroke="#333" stroke-width="0.9"/></g><g transform="translate(861,1015)"><rect x="1.5" y="2" width="13" height="12" fill="none" stroke="#777" stroke-dasharray="1.5 1.2"/><circle cx="7.5" cy="8" r="5" fill="#f7f7f7" stroke="#333" stroke-width="1.5"/><path d="M11 11.5L15 16" stroke="#333" stroke-width="2.4"/></g><g transform="translate(897,1015)"><rect x="1.5" y="2.5" width="15" height="11" fill="#e9eef3" stroke="#555" stroke-width="1"/><rect x="3.5" y="4.5" width="11" height="7" fill="#9cc2ea" stroke="#6a8fb8" stroke-width="0.6"/><path d="M7 13.5L6 16H12L11 13.5" fill="#777"/></g><g transform="translate(927,1015)"><path d="M2 2V16M2 2H16" stroke="#555" stroke-width="1"/><path d="M5 2V16M2 5H16" stroke="#555" stroke-width="1"/><path d="M8 2V16M2 8H16" stroke="#555" stroke-width="1"/><path d="M11 2V16M2 11H16" stroke="#555" stroke-width="1"/><path d="M14 2V16M2 14H16" stroke="#555" stroke-width="1"/><rect x="2" y="2" width="14" height="14" fill="none" stroke="#555" stroke-width="1.2"/></g><g transform="translate(958,1015)"><path d="M2 6L6 2H16V12L12 16H2Z" fill="#dfe9f3" stroke="#444"/><path d="M2 6H12V16M12 6L16 2" fill="none" stroke="#444"/><circle cx="8" cy="11" r="2.5" fill="none" stroke="#444"/></g><g transform="translate(987,1015)"><rect x="2.5" y="3.5" width="13" height="3" rx="1.5" fill="#8fb8e6" stroke="#2f3f6a" stroke-width="0.9"/><rect x="2.5" y="7.5" width="13" height="3" rx="1.5" fill="#8fb8e6" stroke="#2f3f6a" stroke-width="0.9"/><rect x="2.5" y="11.5" width="13" height="3" rx="1.5" fill="#8fb8e6" stroke="#2f3f6a" stroke-width="0.9"/></g><g transform="translate(1018,1015)"><path d="M3 8A6 6 0 0 1 14 6" fill="none" stroke="#1e7fd8" stroke-width="2.2"/><path d="M15 10A6 6 0 0 1 4 12" fill="none" stroke="#1e4fa0" stroke-width="2.2"/><path d="M12 3L16 7L11.5 8Z" fill="#1e7fd8"/><path d="M6 15L2 11L6.5 10Z" fill="#1e4fa0"/></g><g transform="translate(1049,1015)"><path d="M9 2L17 8L9 14L1 8Z" fill="#6ab0ec"/><path d="M1 8L9 14L17 8V10L9 16L1 10Z" fill="#2e7fd0"/><path d="M9 2L17 8L9 14Z" fill="#4a98e0"/></g><g transform="translate(1081,1015)"><rect x="1" y="4" width="16" height="10" fill="#b9c7d6" stroke="#555"/><rect x="4" y="6" width="8" height="5" fill="#6fa3d6"/><circle cx="14" cy="11" r="1" fill="#d33"/></g><g transform="translate(1110,1015)"><rect x="5" y="1" width="8" height="5" fill="#8e8e8e"/><rect x="7" y="6" width="4" height="11" fill="#9a9a9a"/><path d="M7 8L11 9.5M7 11L11 12.5M7 14L11 15.5" stroke="#666"/></g><g transform="translate(1144,1015)"><path d="M1 5H9Q12 5 12 8V10Q12 13 9 13H1V10H8V8H1Z" fill="#4aa3e6"/><path d="M12 6H17V12H12Z" fill="#4aa3e6"/></g><path d="M773 1022H779 L776 1026Z" fill="#333"/><path d="M883 1022H889 L886 1026Z" fill="#333"/><path d="M913 1022H919 L916 1026Z" fill="#333"/><path d="M944 1022H950 L947 1026Z" fill="#333"/><path d="M975 1022H981 L978 1026Z" fill="#333"/><path d="M1005 1022H1011 L1008 1026Z" fill="#333"/><path d="M1037 1022H1043 L1040 1026Z" fill="#333"/><path d="M1068 1022H1074 L1071 1026Z" fill="#333"/><path d="M1099 1022H1105 L1102 1026Z" fill="#333"/><path d="M1130 1022H1136 L1133 1026Z" fill="#333"/><path d="M1161 1022H1167 L1164 1026Z" fill="#333"/></svg>
<svg style="position:absolute;left:0;top:0" width="1920" height="1080"><defs><radialGradient id="vcs" cx="0.5" cy="0.5" r="0.5"><stop offset="0.6" stop-color="#000" stop-opacity="0.12"/><stop offset="1" stop-color="#000" stop-opacity="0"/></radialGradient></defs><ellipse cx="1862" cy="222" rx="40" ry="22" fill="url(#vcs)"/><path d="M1835 168L1884 172L1890 214L1838 212Z" fill="#efefef" stroke="#777" stroke-width="0.9" stroke-dasharray="3 2"/><path d="M1838 212L1890 214L1876 235L1830 234Z" fill="#e9e9e9" stroke="#777" stroke-width="0.9" stroke-dasharray="3 2"/><text x="1862" y="195" font-size="10" fill="#888" text-anchor="middle" font-family="Liberation Sans" font-weight="700">TOP</text><text x="1857" y="227" font-size="6.5" fill="#888" text-anchor="middle" font-family="Liberation Sans" font-weight="700" font-style="italic" letter-spacing="0.6">FRONT</text><path d="M1830 234V179" stroke="#7be27b" stroke-width="1"/><path d="M1830 234L1838 208" stroke="#3a3ae6" stroke-width="1.4"/><path d="M1830 234L1882 236" stroke="#ff6b6b" stroke-width="1.5"/><text x="1829" y="186" font-size="7" fill="#7be27b" font-family="Liberation Sans" text-anchor="middle">Y</text><text x="1837" y="209" font-size="8" fill="#3a3ae6" font-family="Liberation Sans" text-anchor="middle">Z</text><text x="1888" y="240" font-size="9" fill="#ff6b6b" font-family="Liberation Sans" text-anchor="middle">X</text></svg>
<div style="position:absolute;left:0px;top:1040px;width:1920px;height:40px;background:linear-gradient(90deg,#203540 0%,#223441 40%,#21323f 57%,#1e2c41 73%,#1b2846 83%,#1b2646 100%)"></div>
<svg style="position:absolute;left:17px;top:1053px;overflow:visible;" width="16" height="16" viewBox="0 0 16 16"><path d="M0 2.2L6.5 1.3V7.5H0ZM7.3 1.2L16 0V7.5H7.3ZM0 8.3H6.5V14.6L0 13.7ZM7.3 8.3H16V16L7.3 14.8Z" fill="#fff"/></svg>
<div style="position:absolute;left:48px;top:1040px;width:343px;height:40px;background:#f0f0f0"></div>
<svg style="position:absolute;left:60px;top:1053px;overflow:visible;" width="16" height="16" viewBox="0 0 16 16"><circle cx="9.5" cy="6.5" r="5.3" fill="none" stroke="#222" stroke-width="1.3"/><path d="M5.5 10.5L0.5 15.5" stroke="#222" stroke-width="1.5"/></svg>
<svg style="position:absolute;left:313px;top:1043px;overflow:visible;" width="80" height="37" viewBox="0 0 80 37"><path d="M0 37L8 29H72L78 37Z" fill="#e7c28c"/><path d="M13 33L11 22L22 20L30 22L40 20L42 31L30 33Z" fill="#5bab4f"/><path d="M13 31L12 22L22 20L28 23L28 33Z" fill="#f3f0e6"/><path d="M28 23L39 20L41 30L28 33Z" fill="#ece8da"/><path d="M34 18L41 9L44 11L37 20Z" fill="#f6a43a"/><path d="M6 6L8 10L12 11L8 12L6 16L4 12L0 11L4 10Z" fill="#d86bdf"/><circle cx="47" cy="26" r="1.5" fill="#55c7e0"/><path d="M50 10Q50 3 59 3Q68 3 68 10V32Q68 35 65 35H53Q50 35 50 32Z" fill="#2a8cf0"/><path d="M53 24Q59 17 65 24V32H53Z" fill="#56b0ff"/><path d="M55 6Q59 0 63 6" fill="none" stroke="#1560c0" stroke-width="2"/><circle cx="75" cy="8" r="1.8" fill="#f7a81b"/></svg>
<div style="position:absolute;left:391px;top:1040px;width:1px;height:40px;background:#1f3038"></div>
<div style="position:absolute;left:541px;top:1040px;width:48px;height:40px;background:#4b5a60"></div>
<div style="position:absolute;left:590px;top:1040px;width:48px;height:40px;background:#a86a32"></div>
<div style="position:absolute;left:496px;top:1077px;width:40px;height:3px;background:#7ab8ea"></div>
<div style="position:absolute;left:541px;top:1077px;width:48px;height:3px;background:#7ab8ea"></div>
<div style="position:absolute;left:590px;top:1077px;width:48px;height:3px;background:#f0820f"></div>
<div style="position:absolute;left:643px;top:1077px;width:40px;height:3px;background:#7ab8ea"></div>
<svg style="position:absolute;left:408px;top:1052px;overflow:visible;" width="17" height="17" viewBox="0 0 17 17"><path d="M0.8 1V3.5H15.5V1M0.8 16V13.5H15.5V16" fill="none" stroke="#fff" stroke-width="1"/><rect x="1" y="4.5" width="11" height="8" fill="none" stroke="#fff" stroke-width="1.1"/><rect x="13.5" y="4" width="2.5" height="2.5" fill="#fff"/><rect x="14.2" y="8" width="1.1" height="5" fill="#fff"/></svg>
<svg style="position:absolute;left:455px;top:1051px;overflow:visible;" width="22" height="18" viewBox="0 0 22 18"><path d="M0 1H8L10 3H21V17H0Z" fill="#f4c430"/><rect x="0" y="4" width="21" height="13" fill="#ffd75e"/><path d="M6 17V11H15V17H12V14H9V17Z" fill="#2b7fd6"/></svg>
<svg style="position:absolute;left:504px;top:1049px;overflow:visible;" width="26" height="26" viewBox="0 0 26 26"><circle cx="10.5" cy="10.5" r="10.5" fill="#e8453c"/><path d="M10.5 10.5L1.4 5.25A10.5 10.5 0 0 0 10.5 21Z" fill="#34a853"/><path d="M10.5 10.5L10.5 21A10.5 10.5 0 0 0 19.6 5.25Z" fill="#fbbc05"/><circle cx="10.5" cy="10.5" r="4.8" fill="#fff"/><circle cx="10.5" cy="10.5" r="3.8" fill="#4285f4"/><circle cx="17" cy="17" r="6.5" fill="#6b5a4a" stroke="#fff" stroke-width="1"/><rect x="12" y="15" width="10" height="3" fill="#1a2a3a"/></svg>
<svg style="position:absolute;left:652px;top:1049px;overflow:visible;" width="26" height="26" viewBox="0 0 26 26"><circle cx="10.5" cy="10.5" r="10.5" fill="#e8453c"/><path d="M10.5 10.5L1.4 5.25A10.5 10.5 0 0 0 10.5 21Z" fill="#34a853"/><path d="M10.5 10.5L10.5 21A10.5 10.5 0 0 0 19.6 5.25Z" fill="#fbbc05"/><circle cx="10.5" cy="10.5" r="4.8" fill="#fff"/><circle cx="10.5" cy="10.5" r="3.8" fill="#4285f4"/><circle cx="17" cy="17" r="6.5" fill="#e9d7c2" stroke="#fff" stroke-width="1"/><circle cx="17" cy="16" r="3" fill="#3a2a20"/><path d="M12 22Q17 18 22 22" fill="#2a2a2a"/></svg>
<svg style="position:absolute;left:554px;top:1048px;overflow:visible;" width="23" height="25" viewBox="0 0 23 25"><path d="M2 3Q2 0 5 0H19Q22 0 22 3V16H2Z" fill="#f26b1d"/><path d="M0 2L2 3V16L0 14Z" fill="#e05a10"/><rect x="3" y="16" width="19" height="8" rx="1" fill="#b4461a"/><text x="12" y="13" font-size="11" font-weight="700" fill="#fff" text-anchor="middle" font-family="Liberation Sans">F</text><text x="12.5" y="22.5" font-size="5" font-weight="700" fill="#f5c9a6" text-anchor="middle" font-family="Liberation Sans">360</text></svg>
<svg style="position:absolute;left:605px;top:1050px;overflow:visible;" width="24" height="22" viewBox="0 0 24 22"><path d="M2 0L9 3V22L2 19Z" fill="#f5d77a"/><path d="M4 1H14V18H4Z" fill="#ffe9a8"/><path d="M9 20Q9 14 14 14Q16 11 19 12Q23 12 23 17Q24 20 21 21H11Q9 21 9 20Z" fill="#1f7ad6"/></svg>
<svg style="position:absolute;left:1680px;top:1053px;overflow:visible;" width="13" height="8" viewBox="0 0 13 8"><path d="M0.7 7.2L6.5 1.3L12.3 7.2" fill="none" stroke="#fff" stroke-width="1.2"/></svg>
<svg style="position:absolute;left:1702px;top:1052px;overflow:visible;" width="18" height="11" viewBox="0 0 18 11"><path d="M2 10Q0 10 0 8Q0 6 3 6Q4 2 8 2Q11 0 13 3Q17 3 17 7Q18 10 15 10Z" fill="#1b8ae6"/><path d="M3 6Q4 2 8 2Q11 0 13 3" fill="#2f9ef0"/></svg>
<svg style="position:absolute;left:1727px;top:1051px;overflow:visible;" width="18" height="15" viewBox="0 0 18 15"><rect x="4" y="1" width="13" height="9" fill="none" stroke="#fff" stroke-width="1.1"/><path d="M10.5 10V13M7 13.5H14" stroke="#fff" stroke-width="1.1"/><rect x="0.5" y="0.5" width="3" height="3" fill="none" stroke="#fff" stroke-width="0.9"/><path d="M2 3.5V13" stroke="#fff" stroke-width="0.9"/></svg>
<svg style="position:absolute;left:1750px;top:1052px;overflow:visible;" width="18" height="14" viewBox="0 0 18 14"><path d="M1 4.5H4L8 1V13L4 9.5H1Z" fill="none" stroke="#fff" stroke-width="1.1"/><path d="M10.5 4.5Q12 7 10.5 9.5M13 3Q15.5 7 13 11M15.5 1.5Q19 7 15.5 12.5" fill="none" stroke="#fff" stroke-width="1.1"/></svg>
<svg style="position:absolute;left:1779px;top:1051px;overflow:visible;" width="17" height="17" viewBox="0 0 17 17"><path d="M3 14Q1 14 1 12Q1 10 3 11L12 2Q14 0.5 15 2Q16 3.5 14 5L5 14Q7 15 8 13M11 3L14 6M4 9L8 13" fill="none" stroke="#fff" stroke-width="1.1"/></svg>
<svg style="position:absolute;left:1878px;top:1051px;overflow:visible;" width="26" height="26" viewBox="0 0 26 26"><path d="M1 1H16V12H7L4 15V12H1Z" fill="#fff"/><path d="M4 4H13M4 6.5H13M4 9H11" stroke="#1b2542" stroke-width="1"/><circle cx="16" cy="16" r="7" fill="#3b3b3b" stroke="#777" stroke-width="0.8"/><text x="16" y="20" font-size="10" fill="#fff" text-anchor="middle" font-family="Liberation Sans">5</text></svg>
<div style="position:absolute;left:1915px;top:1040px;width:1px;height:40px;background:#6a7080"></div>
<div class="t" style="left:23.00px;top:6.09px;font-size:12.5px;line-height:13.96px;color:#1a1a1a;font-weight:400;transform:scaleX(0.9248);">Autodesk Fusion 360 (Education License)</div>
<div class="t" style="left:950.50px;top:35.99px;font-size:12.5px;line-height:13.96px;color:#222222;font-weight:400;transform:scaleX(0.9735);">Untitled*</div>
<div class="t" style="left:1887.00px;top:34.05px;font-size:11px;line-height:12.29px;color:#555555;font-weight:400;transform:scaleX(1.0905);">MJ</div>
<div class="t" style="left:22.50px;top:89.59px;font-size:11.5px;line-height:12.85px;color:#2b2b2b;font-weight:700;transform:scaleX(0.8951);">MANUFACTURE</div>
<div class="t" style="left:150.50px;top:60.05px;font-size:11px;line-height:12.29px;color:#0696d7;font-weight:400;transform:scaleX(0.8747);">MILLING</div>
<div class="t" style="left:233.00px;top:60.05px;font-size:11px;line-height:12.29px;color:#3a3a3a;font-weight:400;transform:scaleX(0.8781);">TURNING</div>
<div class="t" style="left:321.30px;top:60.05px;font-size:11px;line-height:12.29px;color:#3a3a3a;font-weight:400;transform:scaleX(0.8909);">ADDITIVE</div>
<div class="t" style="left:414.30px;top:60.05px;font-size:11px;line-height:12.29px;color:#3a3a3a;font-weight:400;transform:scaleX(0.8522);">INSPECTION</div>
<div class="t" style="left:517.20px;top:60.05px;font-size:11px;line-height:12.29px;color:#3a3a3a;font-weight:400;transform:scaleX(0.9058);">FABRICATION</div>
<div class="t" style="left:630.30px;top:60.05px;font-size:11px;line-height:12.29px;color:#3a3a3a;font-weight:400;transform:scaleX(0.8492);">UTILITIES</div>
<div class="t" style="left:151.50px;top:121.05px;font-size:11px;line-height:12.29px;color:#3a3a3a;font-weight:400;transform:scaleX(0.8504);">SETUP</div>
<div class="t" style="left:279.00px;top:121.05px;font-size:11px;line-height:12.29px;color:#3a3a3a;font-weight:400;transform:scaleX(0.9031);">2D</div>
<div class="t" style="left:505.60px;top:121.05px;font-size:11px;line-height:12.29px;color:#3a3a3a;font-weight:400;transform:scaleX(0.8604);">3D</div>
<div class="t" style="left:695.30px;top:121.05px;font-size:11px;line-height:12.29px;color:#3a3a3a;font-weight:400;transform:scaleX(0.8709);">DRILLING</div>
<div class="t" style="left:786.70px;top:121.05px;font-size:11px;line-height:12.29px;color:#3a3a3a;font-weight:400;transform:scaleX(0.9028);">MULTI-AXIS</div>
<div class="t" style="left:931.70px;top:121.05px;font-size:11px;line-height:12.29px;color:#3a3a3a;font-weight:400;transform:scaleX(0.8766);">MODIFY</div>
<div class="t" style="left:1090.30px;top:121.05px;font-size:11px;line-height:12.29px;color:#3a3a3a;font-weight:400;transform:scaleX(0.9017);">ACTIONS</div>
<div class="t" style="left:1252.50px;top:121.05px;font-size:11px;line-height:12.29px;color:#3a3a3a;font-weight:400;transform:scaleX(0.9269);">MANAGE</div>
<div class="t" style="left:1385.50px;top:121.05px;font-size:11px;line-height:12.29px;color:#3a3a3a;font-weight:400;transform:scaleX(0.8472);">INSPECT</div>
<div class="t" style="left:1464.30px;top:121.05px;font-size:11px;line-height:12.29px;color:#3a3a3a;font-weight:400;transform:scaleX(0.8996);">SELECT</div>
<div class="t" style="left:29.00px;top:150.34px;font-size:11px;line-height:12.29px;color:#555555;font-weight:400;transform:scaleX(0.9148);">BROWSER</div>
<div class="t" style="left:98.50px;top:178.34px;font-size:11px;line-height:12.29px;color:#333333;font-weight:400;transform:scaleX(0.9360);">CAM Root</div>
<div class="t" style="left:91.50px;top:202.34px;font-size:11px;line-height:12.29px;color:#333333;font-weight:400;transform:scaleX(0.9434);">Units: in</div>
<div class="t" style="left:91.50px;top:226.34px;font-size:11px;line-height:12.29px;color:#333333;font-weight:400;">Named Views</div>
<div class="t" style="left:116.50px;top:250.34px;font-size:11px;line-height:12.29px;color:#333333;font-weight:400;transform:scaleX(0.9389);">Models</div>
<div class="t" style="left:91.50px;top:274.35px;font-size:11px;line-height:12.29px;color:#333333;font-weight:400;transform:scaleX(0.9747);">Manufacturing Models</div>
<div class="t" style="left:134.50px;top:298.35px;font-size:11px;line-height:12.29px;color:#333333;font-weight:700;transform:scaleX(1.0361);">Manufacturing Model 1</div>
<div class="t" style="left:152.50px;top:322.35px;font-size:11px;line-height:12.29px;color:#333333;font-weight:400;transform:scaleX(0.9834);">Sketches</div>
<div class="t" style="left:152.50px;top:346.35px;font-size:11px;line-height:12.29px;color:#333333;font-weight:400;transform:scaleX(0.9813);">(Unsaved):1</div>
<div class="t" style="left:170.50px;top:370.35px;font-size:11px;line-height:12.29px;color:#333333;font-weight:400;transform:scaleX(0.9269);">Origin</div>
<div class="t" style="left:170.50px;top:394.35px;font-size:11px;line-height:12.29px;color:#333333;font-weight:400;transform:scaleX(0.9536);">Sides:1</div>
<div class="t" style="left:188.50px;top:418.35px;font-size:11px;line-height:12.29px;color:#333333;font-weight:400;transform:scaleX(0.9269);">Origin</div>
<div class="t" style="left:188.50px;top:442.35px;font-size:11px;line-height:12.29px;color:#333333;font-weight:400;transform:scaleX(0.9834);">Sketches</div>
<div class="t" style="left:188.50px;top:466.35px;font-size:11px;line-height:12.29px;color:#333333;font-weight:400;transform:scaleX(0.9758);">Body1 (1):1</div>
<div class="t" style="left:188.50px;top:490.35px;font-size:11px;line-height:12.29px;color:#333333;font-weight:400;transform:scaleX(0.9536);">Body1:1</div>
<div class="t" style="left:170.50px;top:514.34px;font-size:11px;line-height:12.29px;color:#333333;font-weight:400;transform:scaleX(0.9226);">Sides I:1</div>
<div class="t" style="left:188.50px;top:538.34px;font-size:11px;line-height:12.29px;color:#333333;font-weight:400;transform:scaleX(0.9269);">Origin</div>
<div class="t" style="left:188.50px;top:562.34px;font-size:11px;line-height:12.29px;color:#333333;font-weight:400;transform:scaleX(0.9834);">Sketches</div>
<div class="t" style="left:188.50px;top:586.34px;font-size:11px;line-height:12.29px;color:#333333;font-weight:400;transform:scaleX(0.9758);">Body1 (2):1</div>
<div class="t" style="left:188.50px;top:610.34px;font-size:11px;line-height:12.29px;color:#333333;font-weight:400;transform:scaleX(0.9536);">Body2:1</div>
<div class="t" style="left:170.50px;top:634.34px;font-size:11px;line-height:12.29px;color:#333333;font-weight:400;transform:scaleX(0.8971);">Bottom:1</div>
<div class="t" style="left:170.50px;top:658.34px;font-size:11px;line-height:12.29px;color:#333333;font-weight:400;transform:scaleX(0.9472);">Top:1</div>
<div class="t" style="left:91.50px;top:682.34px;font-size:11px;line-height:12.29px;color:#333333;font-weight:400;transform:scaleX(0.9321);">NC Programs</div>
<div class="t" style="left:116.50px;top:706.34px;font-size:11px;line-height:12.29px;color:#333333;font-weight:400;transform:scaleX(0.9781);">Setups</div>
<div class="t" style="left:160.00px;top:729.89px;font-size:11.5px;line-height:12.85px;color:#ffffff;font-weight:700;transform:scaleX(0.9389);">Setup1</div>
<div class="t" style="left:177.50px;top:754.34px;font-size:11px;line-height:12.29px;color:#333333;font-weight:400;transform:scaleX(0.9662);">[T1] 2D Adaptive2</div>
<div class="t" style="left:177.50px;top:778.34px;font-size:11px;line-height:12.29px;color:#333333;font-weight:400;transform:scaleX(0.9541);">[T1] 2D Contour2</div>
<div class="t" style="left:177.70px;top:802.34px;font-size:11px;line-height:12.29px;color:#ffffff;font-weight:400;transform:scaleX(1.0849);">[T2] Drill1 [Rapid out]</div>
<div class="t" style="left:29.00px;top:1016.64px;font-size:11px;line-height:12.29px;color:#555555;font-weight:400;transform:scaleX(0.8882);">COMMENTS</div>
<div class="t" style="left:171.00px;top:135.59px;font-size:11.5px;line-height:12.85px;color:#ffffff;font-weight:700;transform:scaleX(1.0139);">Change Workspace</div>
<div class="t" style="left:1741.00px;top:1017.79px;font-size:11.5px;line-height:12.85px;color:#333333;font-weight:700;transform:scaleX(0.9577);">Drill1 | Machining time: 0:02:37</div>
<div class="t" style="left:88.50px;top:1052.42px;font-size:15px;line-height:16.75px;color:#1d1d1d;font-weight:400;transform:scaleX(0.9617);">Type here to search</div>
<div class="t" style="left:1810.00px;top:1044.64px;font-size:12px;line-height:13.40px;color:#ffffff;font-weight:400;transform:scaleX(0.9837);">11:01 AM</div>
<div class="t" style="left:1812.00px;top:1061.64px;font-size:12px;line-height:13.40px;color:#ffffff;font-weight:400;">6/6/2023</div>
</body></html>
